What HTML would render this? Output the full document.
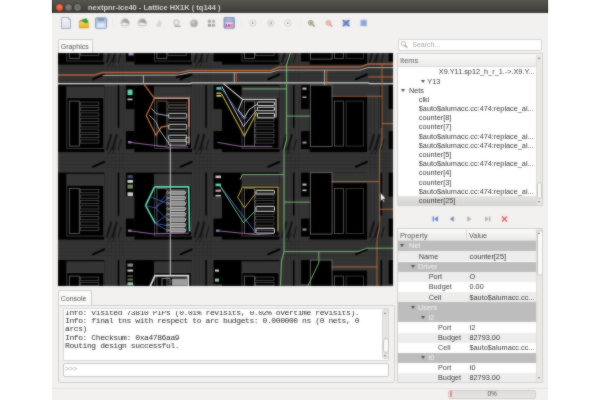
<!DOCTYPE html>
<html><head><meta charset="utf-8">
<style>
*{margin:0;padding:0;box-sizing:border-box}
html,body{width:600px;height:400px;overflow:hidden;background:#fff;font-family:"Liberation Sans",sans-serif}
.a{position:absolute}
#win{position:absolute;left:52px;top:0;width:496px;height:400px;background:#f2f1f0;overflow:hidden;will-change:transform}
#title{position:absolute;left:0;top:0;width:496px;height:12.8px;background:linear-gradient(#58574f,#45443f 70%,#393834)}
#title .t{position:absolute;left:36px;top:3.7px;font-size:7.5px;line-height:7.5px;font-weight:bold;color:#dfdbd2;white-space:nowrap;letter-spacing:0}
.btn{position:absolute;top:3.5px;width:7px;height:7px;border-radius:50%}
.tab{position:absolute;background:#fbfbfa;border:1px solid #cfcdca;border-bottom:none;border-radius:2px 2px 0 0;font-size:7.5px;color:#4c4c4c}
#gfx{position:absolute;left:6px;top:53.4px;width:335px;height:233.1px;background:#000;overflow:hidden}
.tr{font-size:7.3px;color:#333;white-space:nowrap;line-height:9px}
.arr{width:0;height:0;border-left:2.2px solid transparent;border-right:2.2px solid transparent;border-top:3px solid #4c4c4c}
.mono{font-family:"Liberation Mono",monospace}
#win2{position:absolute;left:52px;top:0;width:496px;height:400px;background:#f2f1f0;overflow:hidden;filter:blur(1px);opacity:0.5}
.title2{position:absolute;left:0;top:0;width:496px;height:12.8px;background:linear-gradient(#58574f,#45443f 70%,#393834)}
.title2 .t{position:absolute;left:36px;top:3.7px;font-size:7.5px;line-height:7.5px;font-weight:bold;color:#dfdbd2;white-space:nowrap;letter-spacing:0}
.gfx2{position:absolute;left:6px;top:53.4px;width:335px;height:233.1px;background:#000;overflow:hidden}
</style></head><body>
<div id="win">
  <div id="title">
    <div class="btn" style="left:4px;background:radial-gradient(circle at 50% 40%,#f2835a,#dc5530 60%,#b8482a);box-shadow:0 0 0 0.5px #5a2a1a"></div>
    <div class="btn" style="left:13px;background:radial-gradient(circle at 50% 40%,#85847f,#6a6965 60%,#5c5b57);box-shadow:0 0 0 0.5px #2e2d2a"></div>
    <div class="btn" style="left:22px;background:radial-gradient(circle at 50% 45%,#6a6965 30%,#85847f 45%,#6a6965 60%,#5c5b57);box-shadow:0 0 0 0.5px #2e2d2a"></div>
    <div class="t">nextpnr-ice40 - Lattice HX1K ( tq144 )</div>
  </div>
  <div class="a" style="left:0;top:12.8px;width:496px;height:1.2px;background:#fbfbfa"></div>
  <!-- toolbar -->
<svg class="a" style="left:0;top:0" width="496" height="40" viewBox="52 0 496 40">
<defs>
<linearGradient id="gdoc" x1="0" y1="0" x2="0" y2="1"><stop offset="0" stop-color="#f4f6fa"/><stop offset="1" stop-color="#d8dee8"/></linearGradient>
<linearGradient id="gfold" x1="0" y1="0" x2="0" y2="1"><stop offset="0" stop-color="#f4e060"/><stop offset="1" stop-color="#e0a818"/></linearGradient>
<linearGradient id="gsave" x1="0" y1="0" x2="0" y2="1"><stop offset="0" stop-color="#a8b8d8"/><stop offset="1" stop-color="#c8d8f0"/></linearGradient>
<radialGradient id="ggray" cx="0.6" cy="0.35" r="0.7"><stop offset="0" stop-color="#d8d8d8"/><stop offset="0.5" stop-color="#a8a8a8"/><stop offset="1" stop-color="#c8c8c8"/></radialGradient>
</defs>
<!-- new -->
<path d="M61.5,17.5 H68.5 L70.5,19.5 V28.5 H61.5 Z" fill="url(#gdoc)" stroke="#a4aab4" stroke-width="0.9"/>
<path d="M68.5,17.5 V19.5 H70.5" fill="none" stroke="#9aa0aa" stroke-width="0.7"/>
<!-- open -->
<path d="M79.3,21.5 H83 L84,22.5 H88.6 V28 H79.3 Z" fill="url(#gfold)" stroke="#c89818" stroke-width="0.5"/>
<path d="M81,21 Q83,18 86.5,18.5 L88.5,21.5 L86.5,23.5 Z" fill="#3c9a2a"/>
<path d="M79.5,22 Q80.5,19.5 82.5,19.8" fill="none" stroke="#e87828" stroke-width="1.2"/>
<!-- save -->
<rect x="95.6" y="17.8" width="11" height="10.6" rx="1" fill="url(#gsave)" stroke="#8494b0" stroke-width="0.9"/>
<rect x="98" y="18" width="6" height="3" fill="#8898b8"/>
<rect x="97.5" y="23.3" width="7.3" height="4.5" fill="#dde8f8"/>
<!-- separator -->
<rect x="112" y="19" width="0.6" height="8" fill="#e4e2de"/>
<!-- gray icons -->
<radialGradient id="gsph" cx="0.65" cy="0.3" r="0.75"><stop offset="0" stop-color="#9a9a9a"/><stop offset="0.6" stop-color="#b8b8b8"/><stop offset="1" stop-color="#d4d4d4"/></radialGradient>
<circle cx="125" cy="23.2" r="4.6" fill="url(#gsph)"/>
<path d="M120.8,24.5 L124,22.3 L129,24 L128.5,27.5 L121.5,27.5 Z" fill="#ececec"/>
<path d="M121,25.5 L128.8,25.5" stroke="#b0b0b0" stroke-width="0.6"/>
<circle cx="142.2" cy="23.2" r="4.6" fill="url(#gsph)"/>
<path d="M138,24.5 L141.2,22.3 L146.2,24 L145.7,27.5 L138.7,27.5 Z" fill="#ececec"/>
<path d="M138.2,25.5 L146,25.5" stroke="#b0b0b0" stroke-width="0.6"/>
<path d="M156,26 L159,20 L162,23 L160,27 Z" fill="#d0d0d0" opacity="0.8"/>
<circle cx="176.5" cy="22.5" r="2.7" fill="#e8e8e8" stroke="#b4b4b4" stroke-width="0.9"/>
<path d="M174.5,25.5 H180.5 V27 H174.5 Z" fill="#a8a8a8"/>
<circle cx="194" cy="23.3" r="3.9" fill="#b0b0b0"/>
<circle cx="192.8" cy="22" r="1.8" fill="#c8c8c8"/>
<circle cx="209.5" cy="21.3" r="1.7" fill="#a8a8a8"/><circle cx="213.5" cy="21.3" r="1.7" fill="#b8b8b8"/>
<circle cx="209.5" cy="25.3" r="1.7" fill="#9c9c9c"/><circle cx="213.5" cy="25.3" r="1.7" fill="#a8a8a8"/>
<!-- save as -->
<rect x="224" y="17.5" width="10.3" height="10.8" rx="0.8" fill="#94acd4" stroke="#6a80a8" stroke-width="0.8"/>
<rect x="226.3" y="17.8" width="5.6" height="3" fill="#a8b8d0"/>
<rect x="225.6" y="22.3" width="7.2" height="5.3" fill="#f0d0e8"/>
<text x="229.2" y="26.8" font-size="3.6" font-family="Liberation Sans" font-weight="bold" fill="#c03070" text-anchor="middle">ABC</text>
<rect x="241.4" y="19" width="0.6" height="8" fill="#e8e6e2"/>
<!-- circles -->
<g fill="none" stroke="#c8c6c2" stroke-width="0.7">
<circle cx="252.8" cy="23.1" r="3.2"/><circle cx="270.8" cy="23.1" r="3.2"/><circle cx="287.8" cy="23.1" r="3.2"/>
</g>
<path d="M252,21.6 L254,23.1 L252,24.6 Z" fill="#9a9894"/>
<rect x="269.6" y="21.7" width="0.8" height="2.8" fill="#9a9894"/><rect x="271.2" y="21.7" width="0.8" height="2.8" fill="#9a9894"/>
<rect x="287" y="22.3" width="1.6" height="1.6" fill="#9a9894"/>
<rect x="300.6" y="19" width="0.6" height="8" fill="#e8e6e2"/>
<!-- zoom in -->
<circle cx="310.8" cy="22.8" r="2.4" fill="#c8d4a8" stroke="#98a080" stroke-width="1"/>
<circle cx="310.8" cy="22.8" r="1.1" fill="#88a060"/>
<path d="M312.6,24.6 L314.5,26.5" stroke="#8a9078" stroke-width="1.4"/>
<!-- zoom out -->
<circle cx="328.4" cy="22.8" r="2.4" fill="#f4d8cc" stroke="#d8a090" stroke-width="1"/>
<path d="M327.2,22.8 H329.6" stroke="#d07060" stroke-width="0.8"/>
<path d="M330.2,24.6 L332.1,26.5" stroke="#c88a80" stroke-width="1.4"/>
<!-- fit -->
<rect x="342.8" y="20" width="6.6" height="6.2" fill="#9cb0e0"/>
<path d="M342.8,20 L349.4,26.2 M349.4,20 L342.8,26.2" stroke="#5a6cb0" stroke-width="1.2"/>
<!-- square -->
<rect x="360.8" y="20" width="6" height="6" fill="#8ea4d8" stroke="#b4c4e8" stroke-width="0.6"/>
</svg>
  <!-- graphics tab -->
  <div class="tab" style="left:5.5px;top:38.5px;width:35px;height:15px"></div><div class="a" style="left:8.7px;top:42.9px;font-size:7px;line-height:7px;color:#505050">Graphics</div>
  <div id="gfx">
    <svg id="gsvg" width="335" height="233.1" viewBox="58 53.4 335 233.1" style="display:block">
<rect x="58.00" y="53.00" width="335.00" height="234.00" fill="#353535" />
<rect x="58.00" y="66.50" width="335.00" height="0.60" fill="#2a2a2a" />
<rect x="58.00" y="70.00" width="335.00" height="0.60" fill="#2a2a2a" />
<rect x="58.00" y="73.50" width="335.00" height="0.60" fill="#2a2a2a" />
<rect x="58.00" y="77.00" width="335.00" height="0.60" fill="#2a2a2a" />
<rect x="58.00" y="80.50" width="335.00" height="0.60" fill="#2a2a2a" />
<rect x="58.00" y="154.00" width="335.00" height="0.60" fill="#2a2a2a" />
<rect x="58.00" y="157.50" width="335.00" height="0.60" fill="#2a2a2a" />
<rect x="58.00" y="161.00" width="335.00" height="0.60" fill="#2a2a2a" />
<rect x="58.00" y="164.50" width="335.00" height="0.60" fill="#2a2a2a" />
<rect x="58.00" y="168.00" width="335.00" height="0.60" fill="#2a2a2a" />
<rect x="58.00" y="241.50" width="335.00" height="0.60" fill="#2a2a2a" />
<rect x="58.00" y="245.00" width="335.00" height="0.60" fill="#2a2a2a" />
<rect x="58.00" y="248.50" width="335.00" height="0.60" fill="#2a2a2a" />
<rect x="58.00" y="252.00" width="335.00" height="0.60" fill="#2a2a2a" />
<rect x="58.00" y="255.50" width="335.00" height="0.60" fill="#2a2a2a" />
<rect x="58.00" y="329.00" width="335.00" height="0.60" fill="#2a2a2a" />
<rect x="58.00" y="332.50" width="335.00" height="0.60" fill="#2a2a2a" />
<rect x="58.00" y="336.00" width="335.00" height="0.60" fill="#2a2a2a" />
<rect x="58.00" y="339.50" width="335.00" height="0.60" fill="#2a2a2a" />
<rect x="58.00" y="343.00" width="335.00" height="0.60" fill="#2a2a2a" />
<rect x="107.30" y="53.00" width="0.60" height="233.00" fill="#2c2c2c" />
<rect x="111.30" y="53.00" width="0.60" height="233.00" fill="#2c2c2c" />
<rect x="115.30" y="53.00" width="0.60" height="233.00" fill="#2c2c2c" />
<rect x="119.30" y="53.00" width="0.60" height="233.00" fill="#2c2c2c" />
<rect x="122.80" y="53.00" width="0.60" height="233.00" fill="#2c2c2c" />
<rect x="194.90" y="53.00" width="0.60" height="233.00" fill="#2c2c2c" />
<rect x="198.90" y="53.00" width="0.60" height="233.00" fill="#2c2c2c" />
<rect x="202.90" y="53.00" width="0.60" height="233.00" fill="#2c2c2c" />
<rect x="206.90" y="53.00" width="0.60" height="233.00" fill="#2c2c2c" />
<rect x="210.40" y="53.00" width="0.60" height="233.00" fill="#2c2c2c" />
<rect x="282.50" y="53.00" width="0.60" height="233.00" fill="#2c2c2c" />
<rect x="286.50" y="53.00" width="0.60" height="233.00" fill="#2c2c2c" />
<rect x="290.50" y="53.00" width="0.60" height="233.00" fill="#2c2c2c" />
<rect x="294.50" y="53.00" width="0.60" height="233.00" fill="#2c2c2c" />
<rect x="298.00" y="53.00" width="0.60" height="233.00" fill="#2c2c2c" />
<rect x="370.10" y="53.00" width="0.60" height="233.00" fill="#2c2c2c" />
<rect x="374.10" y="53.00" width="0.60" height="233.00" fill="#2c2c2c" />
<rect x="378.10" y="53.00" width="0.60" height="233.00" fill="#2c2c2c" />
<rect x="382.10" y="53.00" width="0.60" height="233.00" fill="#2c2c2c" />
<rect x="385.60" y="53.00" width="0.60" height="233.00" fill="#2c2c2c" />
<rect x="457.70" y="53.00" width="0.60" height="233.00" fill="#2c2c2c" />
<rect x="461.70" y="53.00" width="0.60" height="233.00" fill="#2c2c2c" />
<rect x="465.70" y="53.00" width="0.60" height="233.00" fill="#2c2c2c" />
<rect x="469.70" y="53.00" width="0.60" height="233.00" fill="#2c2c2c" />
<rect x="473.20" y="53.00" width="0.60" height="233.00" fill="#2c2c2c" />
<rect x="38.30" y="-2.00" width="8.50" height="24.00" fill="#000" />
<rect x="38.30" y="44.00" width="8.50" height="18.00" fill="#000" />
<rect x="46.80" y="-2.00" width="57.50" height="67.00" fill="#000" />
<rect x="66.30" y="-0.80" width="38.00" height="11.30" fill="#353535" />
<rect x="66.80" y="10.50" width="37.00" height="51.00" fill="none" stroke="#484848" stroke-width="0.8" rx="0"/>
<rect x="69.30" y="14.00" width="10.00" height="45.00" fill="none" stroke="#6e6e6e" stroke-width="0.8" rx="0"/>
<rect x="80.30" y="15.00" width="18.50" height="3.20" fill="none" stroke="#5a5a5a" stroke-width="0.7" rx="0"/>
<rect x="80.30" y="20.40" width="18.50" height="3.20" fill="none" stroke="#5a5a5a" stroke-width="0.7" rx="0"/>
<rect x="80.30" y="25.80" width="18.50" height="3.20" fill="none" stroke="#5a5a5a" stroke-width="0.7" rx="0"/>
<rect x="80.30" y="31.20" width="18.50" height="3.20" fill="none" stroke="#5a5a5a" stroke-width="0.7" rx="0"/>
<rect x="80.30" y="36.60" width="18.50" height="3.20" fill="none" stroke="#5a5a5a" stroke-width="0.7" rx="0"/>
<rect x="80.30" y="42.00" width="18.50" height="3.20" fill="none" stroke="#5a5a5a" stroke-width="0.7" rx="0"/>
<rect x="80.30" y="47.40" width="18.50" height="3.20" fill="none" stroke="#5a5a5a" stroke-width="0.7" rx="0"/>
<rect x="80.30" y="52.80" width="18.50" height="3.20" fill="none" stroke="#5a5a5a" stroke-width="0.7" rx="0"/>
<polyline points="118.50,-2.00 118.50,41.00" fill="none" stroke="#000" stroke-width="1.5" stroke-linejoin="miter" />
<polyline points="106.80,63.00 111.30,47.00" fill="none" stroke="#141414" stroke-width="2.2" stroke-linejoin="miter" />
<polyline points="112.30,63.00 116.80,47.00" fill="none" stroke="#141414" stroke-width="2.2" stroke-linejoin="miter" />
<polyline points="118.30,63.00 121.30,52.00" fill="none" stroke="#1a1a1a" stroke-width="1.5" stroke-linejoin="miter" />
<polyline points="92.30,80.00 104.80,74.50" fill="none" stroke="#000" stroke-width="2.0" stroke-linejoin="miter" />
<polyline points="108.30,67.00 112.30,59.00" fill="none" stroke="#1a1a1a" stroke-width="1.0" stroke-linejoin="miter" />
<polyline points="112.30,67.00 116.30,59.00" fill="none" stroke="#1a1a1a" stroke-width="1.0" stroke-linejoin="miter" />
<rect x="125.90" y="-2.00" width="8.50" height="24.00" fill="#000" />
<rect x="125.90" y="44.00" width="8.50" height="18.00" fill="#000" />
<rect x="134.40" y="-2.00" width="57.50" height="67.00" fill="#000" />
<rect x="153.90" y="-0.80" width="38.00" height="11.30" fill="#353535" />
<rect x="154.40" y="10.50" width="37.00" height="51.00" fill="none" stroke="#484848" stroke-width="0.8" rx="0"/>
<rect x="156.90" y="14.00" width="10.00" height="45.00" fill="none" stroke="#6e6e6e" stroke-width="0.8" rx="0"/>
<rect x="167.90" y="15.00" width="18.50" height="3.20" fill="none" stroke="#5a5a5a" stroke-width="0.7" rx="0"/>
<rect x="167.90" y="20.40" width="18.50" height="3.20" fill="none" stroke="#5a5a5a" stroke-width="0.7" rx="0"/>
<rect x="167.90" y="25.80" width="18.50" height="3.20" fill="none" stroke="#5a5a5a" stroke-width="0.7" rx="0"/>
<rect x="167.90" y="31.20" width="18.50" height="3.20" fill="none" stroke="#5a5a5a" stroke-width="0.7" rx="0"/>
<rect x="167.90" y="36.60" width="18.50" height="3.20" fill="none" stroke="#5a5a5a" stroke-width="0.7" rx="0"/>
<rect x="167.90" y="42.00" width="18.50" height="3.20" fill="none" stroke="#5a5a5a" stroke-width="0.7" rx="0"/>
<rect x="167.90" y="47.40" width="18.50" height="3.20" fill="none" stroke="#5a5a5a" stroke-width="0.7" rx="0"/>
<rect x="167.90" y="52.80" width="18.50" height="3.20" fill="none" stroke="#5a5a5a" stroke-width="0.7" rx="0"/>
<polyline points="206.10,-2.00 206.10,41.00" fill="none" stroke="#000" stroke-width="1.5" stroke-linejoin="miter" />
<polyline points="194.40,63.00 198.90,47.00" fill="none" stroke="#141414" stroke-width="2.2" stroke-linejoin="miter" />
<polyline points="199.90,63.00 204.40,47.00" fill="none" stroke="#141414" stroke-width="2.2" stroke-linejoin="miter" />
<polyline points="205.90,63.00 208.90,52.00" fill="none" stroke="#1a1a1a" stroke-width="1.5" stroke-linejoin="miter" />
<polyline points="179.90,80.00 192.40,74.50" fill="none" stroke="#000" stroke-width="2.0" stroke-linejoin="miter" />
<polyline points="195.90,67.00 199.90,59.00" fill="none" stroke="#1a1a1a" stroke-width="1.0" stroke-linejoin="miter" />
<polyline points="199.90,67.00 203.90,59.00" fill="none" stroke="#1a1a1a" stroke-width="1.0" stroke-linejoin="miter" />
<rect x="213.50" y="-2.00" width="8.50" height="24.00" fill="#000" />
<rect x="213.50" y="44.00" width="8.50" height="18.00" fill="#000" />
<rect x="222.00" y="-2.00" width="57.50" height="67.00" fill="#000" />
<rect x="241.50" y="-0.80" width="38.00" height="11.30" fill="#353535" />
<rect x="242.00" y="10.50" width="37.00" height="51.00" fill="none" stroke="#484848" stroke-width="0.8" rx="0"/>
<rect x="244.50" y="14.00" width="10.00" height="45.00" fill="none" stroke="#6e6e6e" stroke-width="0.8" rx="0"/>
<rect x="255.50" y="15.00" width="18.50" height="3.20" fill="none" stroke="#5a5a5a" stroke-width="0.7" rx="0"/>
<rect x="255.50" y="20.40" width="18.50" height="3.20" fill="none" stroke="#5a5a5a" stroke-width="0.7" rx="0"/>
<rect x="255.50" y="25.80" width="18.50" height="3.20" fill="none" stroke="#5a5a5a" stroke-width="0.7" rx="0"/>
<rect x="255.50" y="31.20" width="18.50" height="3.20" fill="none" stroke="#5a5a5a" stroke-width="0.7" rx="0"/>
<rect x="255.50" y="36.60" width="18.50" height="3.20" fill="none" stroke="#5a5a5a" stroke-width="0.7" rx="0"/>
<rect x="255.50" y="42.00" width="18.50" height="3.20" fill="none" stroke="#5a5a5a" stroke-width="0.7" rx="0"/>
<rect x="255.50" y="47.40" width="18.50" height="3.20" fill="none" stroke="#5a5a5a" stroke-width="0.7" rx="0"/>
<rect x="255.50" y="52.80" width="18.50" height="3.20" fill="none" stroke="#5a5a5a" stroke-width="0.7" rx="0"/>
<polyline points="293.70,-2.00 293.70,41.00" fill="none" stroke="#000" stroke-width="1.5" stroke-linejoin="miter" />
<polyline points="282.00,63.00 286.50,47.00" fill="none" stroke="#141414" stroke-width="2.2" stroke-linejoin="miter" />
<polyline points="287.50,63.00 292.00,47.00" fill="none" stroke="#141414" stroke-width="2.2" stroke-linejoin="miter" />
<polyline points="293.50,63.00 296.50,52.00" fill="none" stroke="#1a1a1a" stroke-width="1.5" stroke-linejoin="miter" />
<polyline points="267.50,80.00 280.00,74.50" fill="none" stroke="#000" stroke-width="2.0" stroke-linejoin="miter" />
<polyline points="283.50,67.00 287.50,59.00" fill="none" stroke="#1a1a1a" stroke-width="1.0" stroke-linejoin="miter" />
<polyline points="287.50,67.00 291.50,59.00" fill="none" stroke="#1a1a1a" stroke-width="1.0" stroke-linejoin="miter" />
<rect x="301.10" y="-2.00" width="8.50" height="24.00" fill="#000" />
<rect x="301.10" y="44.00" width="8.50" height="18.00" fill="#000" />
<rect x="309.60" y="-2.00" width="57.50" height="67.00" fill="#000" />
<rect x="331.60" y="-2.00" width="50.50" height="10.50" fill="#353535" />
<rect x="310.60" y="-2.00" width="21.50" height="61.50" fill="none" stroke="#707070" stroke-width="0.8" rx="0"/>
<rect x="334.60" y="14.00" width="9.00" height="45.00" fill="none" stroke="#606060" stroke-width="0.8" rx="0"/>
<rect x="346.10" y="14.00" width="17.50" height="45.00" fill="none" stroke="#404040" stroke-width="0.8" rx="0"/>
<polyline points="381.30,-2.00 381.30,41.00" fill="none" stroke="#000" stroke-width="1.5" stroke-linejoin="miter" />
<polyline points="369.60,63.00 374.10,47.00" fill="none" stroke="#141414" stroke-width="2.2" stroke-linejoin="miter" />
<polyline points="375.10,63.00 379.60,47.00" fill="none" stroke="#141414" stroke-width="2.2" stroke-linejoin="miter" />
<polyline points="381.10,63.00 384.10,52.00" fill="none" stroke="#1a1a1a" stroke-width="1.5" stroke-linejoin="miter" />
<polyline points="355.10,80.00 367.60,74.50" fill="none" stroke="#000" stroke-width="2.0" stroke-linejoin="miter" />
<polyline points="371.10,67.00 375.10,59.00" fill="none" stroke="#1a1a1a" stroke-width="1.0" stroke-linejoin="miter" />
<polyline points="375.10,67.00 379.10,59.00" fill="none" stroke="#1a1a1a" stroke-width="1.0" stroke-linejoin="miter" />
<rect x="388.70" y="-2.00" width="8.50" height="24.00" fill="#000" />
<rect x="388.70" y="44.00" width="8.50" height="18.00" fill="#000" />
<rect x="397.20" y="-2.00" width="57.50" height="67.00" fill="#000" />
<rect x="416.70" y="-0.80" width="38.00" height="11.30" fill="#353535" />
<rect x="417.20" y="10.50" width="37.00" height="51.00" fill="none" stroke="#484848" stroke-width="0.8" rx="0"/>
<rect x="419.70" y="14.00" width="10.00" height="45.00" fill="none" stroke="#6e6e6e" stroke-width="0.8" rx="0"/>
<rect x="430.70" y="15.00" width="18.50" height="3.20" fill="none" stroke="#5a5a5a" stroke-width="0.7" rx="0"/>
<rect x="430.70" y="20.40" width="18.50" height="3.20" fill="none" stroke="#5a5a5a" stroke-width="0.7" rx="0"/>
<rect x="430.70" y="25.80" width="18.50" height="3.20" fill="none" stroke="#5a5a5a" stroke-width="0.7" rx="0"/>
<rect x="430.70" y="31.20" width="18.50" height="3.20" fill="none" stroke="#5a5a5a" stroke-width="0.7" rx="0"/>
<rect x="430.70" y="36.60" width="18.50" height="3.20" fill="none" stroke="#5a5a5a" stroke-width="0.7" rx="0"/>
<rect x="430.70" y="42.00" width="18.50" height="3.20" fill="none" stroke="#5a5a5a" stroke-width="0.7" rx="0"/>
<rect x="430.70" y="47.40" width="18.50" height="3.20" fill="none" stroke="#5a5a5a" stroke-width="0.7" rx="0"/>
<rect x="430.70" y="52.80" width="18.50" height="3.20" fill="none" stroke="#5a5a5a" stroke-width="0.7" rx="0"/>
<polyline points="468.90,-2.00 468.90,41.00" fill="none" stroke="#000" stroke-width="1.5" stroke-linejoin="miter" />
<polyline points="457.20,63.00 461.70,47.00" fill="none" stroke="#141414" stroke-width="2.2" stroke-linejoin="miter" />
<polyline points="462.70,63.00 467.20,47.00" fill="none" stroke="#141414" stroke-width="2.2" stroke-linejoin="miter" />
<polyline points="468.70,63.00 471.70,52.00" fill="none" stroke="#1a1a1a" stroke-width="1.5" stroke-linejoin="miter" />
<polyline points="442.70,80.00 455.20,74.50" fill="none" stroke="#000" stroke-width="2.0" stroke-linejoin="miter" />
<polyline points="458.70,67.00 462.70,59.00" fill="none" stroke="#1a1a1a" stroke-width="1.0" stroke-linejoin="miter" />
<polyline points="462.70,67.00 466.70,59.00" fill="none" stroke="#1a1a1a" stroke-width="1.0" stroke-linejoin="miter" />
<rect x="38.30" y="85.50" width="8.50" height="24.00" fill="#000" />
<rect x="38.30" y="131.50" width="8.50" height="18.00" fill="#000" />
<rect x="46.80" y="85.50" width="57.50" height="67.00" fill="#000" />
<rect x="66.30" y="86.70" width="38.00" height="11.30" fill="#353535" />
<rect x="66.80" y="98.00" width="37.00" height="51.00" fill="none" stroke="#484848" stroke-width="0.8" rx="0"/>
<rect x="69.30" y="101.50" width="10.00" height="45.00" fill="none" stroke="#6e6e6e" stroke-width="0.8" rx="0"/>
<rect x="80.30" y="102.50" width="18.50" height="3.20" fill="none" stroke="#5a5a5a" stroke-width="0.7" rx="0"/>
<rect x="80.30" y="107.90" width="18.50" height="3.20" fill="none" stroke="#5a5a5a" stroke-width="0.7" rx="0"/>
<rect x="80.30" y="113.30" width="18.50" height="3.20" fill="none" stroke="#5a5a5a" stroke-width="0.7" rx="0"/>
<rect x="80.30" y="118.70" width="18.50" height="3.20" fill="none" stroke="#5a5a5a" stroke-width="0.7" rx="0"/>
<rect x="80.30" y="124.10" width="18.50" height="3.20" fill="none" stroke="#5a5a5a" stroke-width="0.7" rx="0"/>
<rect x="80.30" y="129.50" width="18.50" height="3.20" fill="none" stroke="#5a5a5a" stroke-width="0.7" rx="0"/>
<rect x="80.30" y="134.90" width="18.50" height="3.20" fill="none" stroke="#5a5a5a" stroke-width="0.7" rx="0"/>
<rect x="80.30" y="140.30" width="18.50" height="3.20" fill="none" stroke="#5a5a5a" stroke-width="0.7" rx="0"/>
<polyline points="118.50,85.50 118.50,128.50" fill="none" stroke="#000" stroke-width="1.5" stroke-linejoin="miter" />
<polyline points="106.80,150.50 111.30,134.50" fill="none" stroke="#141414" stroke-width="2.2" stroke-linejoin="miter" />
<polyline points="112.30,150.50 116.80,134.50" fill="none" stroke="#141414" stroke-width="2.2" stroke-linejoin="miter" />
<polyline points="118.30,150.50 121.30,139.50" fill="none" stroke="#1a1a1a" stroke-width="1.5" stroke-linejoin="miter" />
<polyline points="92.30,167.50 104.80,162.00" fill="none" stroke="#000" stroke-width="2.0" stroke-linejoin="miter" />
<polyline points="108.30,154.50 112.30,146.50" fill="none" stroke="#1a1a1a" stroke-width="1.0" stroke-linejoin="miter" />
<polyline points="112.30,154.50 116.30,146.50" fill="none" stroke="#1a1a1a" stroke-width="1.0" stroke-linejoin="miter" />
<rect x="125.90" y="85.50" width="8.50" height="24.00" fill="#000" />
<rect x="125.90" y="131.50" width="8.50" height="18.00" fill="#000" />
<rect x="134.40" y="85.50" width="57.50" height="67.00" fill="#000" />
<rect x="153.90" y="86.70" width="38.00" height="11.30" fill="#353535" />
<rect x="154.40" y="98.00" width="37.00" height="51.00" fill="none" stroke="#484848" stroke-width="0.8" rx="0"/>
<rect x="156.90" y="101.50" width="10.00" height="45.00" fill="none" stroke="#6e6e6e" stroke-width="0.8" rx="0"/>
<rect x="167.90" y="102.50" width="18.50" height="3.20" fill="none" stroke="#5a5a5a" stroke-width="0.7" rx="0"/>
<rect x="167.90" y="107.90" width="18.50" height="3.20" fill="none" stroke="#5a5a5a" stroke-width="0.7" rx="0"/>
<rect x="167.90" y="113.30" width="18.50" height="3.20" fill="none" stroke="#5a5a5a" stroke-width="0.7" rx="0"/>
<rect x="167.90" y="118.70" width="18.50" height="3.20" fill="none" stroke="#5a5a5a" stroke-width="0.7" rx="0"/>
<rect x="167.90" y="124.10" width="18.50" height="3.20" fill="none" stroke="#5a5a5a" stroke-width="0.7" rx="0"/>
<rect x="167.90" y="129.50" width="18.50" height="3.20" fill="none" stroke="#5a5a5a" stroke-width="0.7" rx="0"/>
<rect x="167.90" y="134.90" width="18.50" height="3.20" fill="none" stroke="#5a5a5a" stroke-width="0.7" rx="0"/>
<rect x="167.90" y="140.30" width="18.50" height="3.20" fill="none" stroke="#5a5a5a" stroke-width="0.7" rx="0"/>
<polyline points="206.10,85.50 206.10,128.50" fill="none" stroke="#000" stroke-width="1.5" stroke-linejoin="miter" />
<polyline points="194.40,150.50 198.90,134.50" fill="none" stroke="#141414" stroke-width="2.2" stroke-linejoin="miter" />
<polyline points="199.90,150.50 204.40,134.50" fill="none" stroke="#141414" stroke-width="2.2" stroke-linejoin="miter" />
<polyline points="205.90,150.50 208.90,139.50" fill="none" stroke="#1a1a1a" stroke-width="1.5" stroke-linejoin="miter" />
<polyline points="179.90,167.50 192.40,162.00" fill="none" stroke="#000" stroke-width="2.0" stroke-linejoin="miter" />
<polyline points="195.90,154.50 199.90,146.50" fill="none" stroke="#1a1a1a" stroke-width="1.0" stroke-linejoin="miter" />
<polyline points="199.90,154.50 203.90,146.50" fill="none" stroke="#1a1a1a" stroke-width="1.0" stroke-linejoin="miter" />
<rect x="213.50" y="85.50" width="8.50" height="24.00" fill="#000" />
<rect x="213.50" y="131.50" width="8.50" height="18.00" fill="#000" />
<rect x="222.00" y="85.50" width="57.50" height="67.00" fill="#000" />
<rect x="241.50" y="86.70" width="38.00" height="11.30" fill="#353535" />
<rect x="242.00" y="98.00" width="37.00" height="51.00" fill="none" stroke="#484848" stroke-width="0.8" rx="0"/>
<rect x="244.50" y="101.50" width="10.00" height="45.00" fill="none" stroke="#6e6e6e" stroke-width="0.8" rx="0"/>
<rect x="255.50" y="102.50" width="18.50" height="3.20" fill="none" stroke="#5a5a5a" stroke-width="0.7" rx="0"/>
<rect x="255.50" y="107.90" width="18.50" height="3.20" fill="none" stroke="#5a5a5a" stroke-width="0.7" rx="0"/>
<rect x="255.50" y="113.30" width="18.50" height="3.20" fill="none" stroke="#5a5a5a" stroke-width="0.7" rx="0"/>
<rect x="255.50" y="118.70" width="18.50" height="3.20" fill="none" stroke="#5a5a5a" stroke-width="0.7" rx="0"/>
<rect x="255.50" y="124.10" width="18.50" height="3.20" fill="none" stroke="#5a5a5a" stroke-width="0.7" rx="0"/>
<rect x="255.50" y="129.50" width="18.50" height="3.20" fill="none" stroke="#5a5a5a" stroke-width="0.7" rx="0"/>
<rect x="255.50" y="134.90" width="18.50" height="3.20" fill="none" stroke="#5a5a5a" stroke-width="0.7" rx="0"/>
<rect x="255.50" y="140.30" width="18.50" height="3.20" fill="none" stroke="#5a5a5a" stroke-width="0.7" rx="0"/>
<polyline points="293.70,85.50 293.70,128.50" fill="none" stroke="#000" stroke-width="1.5" stroke-linejoin="miter" />
<polyline points="282.00,150.50 286.50,134.50" fill="none" stroke="#141414" stroke-width="2.2" stroke-linejoin="miter" />
<polyline points="287.50,150.50 292.00,134.50" fill="none" stroke="#141414" stroke-width="2.2" stroke-linejoin="miter" />
<polyline points="293.50,150.50 296.50,139.50" fill="none" stroke="#1a1a1a" stroke-width="1.5" stroke-linejoin="miter" />
<polyline points="267.50,167.50 280.00,162.00" fill="none" stroke="#000" stroke-width="2.0" stroke-linejoin="miter" />
<polyline points="283.50,154.50 287.50,146.50" fill="none" stroke="#1a1a1a" stroke-width="1.0" stroke-linejoin="miter" />
<polyline points="287.50,154.50 291.50,146.50" fill="none" stroke="#1a1a1a" stroke-width="1.0" stroke-linejoin="miter" />
<rect x="301.10" y="85.50" width="8.50" height="24.00" fill="#000" />
<rect x="301.10" y="131.50" width="8.50" height="18.00" fill="#000" />
<rect x="309.60" y="85.50" width="57.50" height="67.00" fill="#000" />
<rect x="331.60" y="85.50" width="50.50" height="10.50" fill="#353535" />
<rect x="310.60" y="85.50" width="21.50" height="61.50" fill="none" stroke="#707070" stroke-width="0.8" rx="0"/>
<rect x="334.60" y="101.50" width="9.00" height="45.00" fill="none" stroke="#606060" stroke-width="0.8" rx="0"/>
<rect x="346.10" y="101.50" width="17.50" height="45.00" fill="none" stroke="#404040" stroke-width="0.8" rx="0"/>
<polyline points="381.30,85.50 381.30,128.50" fill="none" stroke="#000" stroke-width="1.5" stroke-linejoin="miter" />
<polyline points="369.60,150.50 374.10,134.50" fill="none" stroke="#141414" stroke-width="2.2" stroke-linejoin="miter" />
<polyline points="375.10,150.50 379.60,134.50" fill="none" stroke="#141414" stroke-width="2.2" stroke-linejoin="miter" />
<polyline points="381.10,150.50 384.10,139.50" fill="none" stroke="#1a1a1a" stroke-width="1.5" stroke-linejoin="miter" />
<polyline points="355.10,167.50 367.60,162.00" fill="none" stroke="#000" stroke-width="2.0" stroke-linejoin="miter" />
<polyline points="371.10,154.50 375.10,146.50" fill="none" stroke="#1a1a1a" stroke-width="1.0" stroke-linejoin="miter" />
<polyline points="375.10,154.50 379.10,146.50" fill="none" stroke="#1a1a1a" stroke-width="1.0" stroke-linejoin="miter" />
<rect x="388.70" y="85.50" width="8.50" height="24.00" fill="#000" />
<rect x="388.70" y="131.50" width="8.50" height="18.00" fill="#000" />
<rect x="397.20" y="85.50" width="57.50" height="67.00" fill="#000" />
<rect x="416.70" y="86.70" width="38.00" height="11.30" fill="#353535" />
<rect x="417.20" y="98.00" width="37.00" height="51.00" fill="none" stroke="#484848" stroke-width="0.8" rx="0"/>
<rect x="419.70" y="101.50" width="10.00" height="45.00" fill="none" stroke="#6e6e6e" stroke-width="0.8" rx="0"/>
<rect x="430.70" y="102.50" width="18.50" height="3.20" fill="none" stroke="#5a5a5a" stroke-width="0.7" rx="0"/>
<rect x="430.70" y="107.90" width="18.50" height="3.20" fill="none" stroke="#5a5a5a" stroke-width="0.7" rx="0"/>
<rect x="430.70" y="113.30" width="18.50" height="3.20" fill="none" stroke="#5a5a5a" stroke-width="0.7" rx="0"/>
<rect x="430.70" y="118.70" width="18.50" height="3.20" fill="none" stroke="#5a5a5a" stroke-width="0.7" rx="0"/>
<rect x="430.70" y="124.10" width="18.50" height="3.20" fill="none" stroke="#5a5a5a" stroke-width="0.7" rx="0"/>
<rect x="430.70" y="129.50" width="18.50" height="3.20" fill="none" stroke="#5a5a5a" stroke-width="0.7" rx="0"/>
<rect x="430.70" y="134.90" width="18.50" height="3.20" fill="none" stroke="#5a5a5a" stroke-width="0.7" rx="0"/>
<rect x="430.70" y="140.30" width="18.50" height="3.20" fill="none" stroke="#5a5a5a" stroke-width="0.7" rx="0"/>
<polyline points="468.90,85.50 468.90,128.50" fill="none" stroke="#000" stroke-width="1.5" stroke-linejoin="miter" />
<polyline points="457.20,150.50 461.70,134.50" fill="none" stroke="#141414" stroke-width="2.2" stroke-linejoin="miter" />
<polyline points="462.70,150.50 467.20,134.50" fill="none" stroke="#141414" stroke-width="2.2" stroke-linejoin="miter" />
<polyline points="468.70,150.50 471.70,139.50" fill="none" stroke="#1a1a1a" stroke-width="1.5" stroke-linejoin="miter" />
<polyline points="442.70,167.50 455.20,162.00" fill="none" stroke="#000" stroke-width="2.0" stroke-linejoin="miter" />
<polyline points="458.70,154.50 462.70,146.50" fill="none" stroke="#1a1a1a" stroke-width="1.0" stroke-linejoin="miter" />
<polyline points="462.70,154.50 466.70,146.50" fill="none" stroke="#1a1a1a" stroke-width="1.0" stroke-linejoin="miter" />
<rect x="38.30" y="173.00" width="8.50" height="24.00" fill="#000" />
<rect x="38.30" y="219.00" width="8.50" height="18.00" fill="#000" />
<rect x="46.80" y="173.00" width="57.50" height="67.00" fill="#000" />
<rect x="66.30" y="174.20" width="38.00" height="11.30" fill="#353535" />
<rect x="66.80" y="185.50" width="37.00" height="51.00" fill="none" stroke="#484848" stroke-width="0.8" rx="0"/>
<rect x="69.30" y="189.00" width="10.00" height="45.00" fill="none" stroke="#6e6e6e" stroke-width="0.8" rx="0"/>
<rect x="80.30" y="190.00" width="18.50" height="3.20" fill="none" stroke="#5a5a5a" stroke-width="0.7" rx="0"/>
<rect x="80.30" y="195.40" width="18.50" height="3.20" fill="none" stroke="#5a5a5a" stroke-width="0.7" rx="0"/>
<rect x="80.30" y="200.80" width="18.50" height="3.20" fill="none" stroke="#5a5a5a" stroke-width="0.7" rx="0"/>
<rect x="80.30" y="206.20" width="18.50" height="3.20" fill="none" stroke="#5a5a5a" stroke-width="0.7" rx="0"/>
<rect x="80.30" y="211.60" width="18.50" height="3.20" fill="none" stroke="#5a5a5a" stroke-width="0.7" rx="0"/>
<rect x="80.30" y="217.00" width="18.50" height="3.20" fill="none" stroke="#5a5a5a" stroke-width="0.7" rx="0"/>
<rect x="80.30" y="222.40" width="18.50" height="3.20" fill="none" stroke="#5a5a5a" stroke-width="0.7" rx="0"/>
<rect x="80.30" y="227.80" width="18.50" height="3.20" fill="none" stroke="#5a5a5a" stroke-width="0.7" rx="0"/>
<polyline points="118.50,173.00 118.50,216.00" fill="none" stroke="#000" stroke-width="1.5" stroke-linejoin="miter" />
<polyline points="106.80,238.00 111.30,222.00" fill="none" stroke="#141414" stroke-width="2.2" stroke-linejoin="miter" />
<polyline points="112.30,238.00 116.80,222.00" fill="none" stroke="#141414" stroke-width="2.2" stroke-linejoin="miter" />
<polyline points="118.30,238.00 121.30,227.00" fill="none" stroke="#1a1a1a" stroke-width="1.5" stroke-linejoin="miter" />
<polyline points="92.30,255.00 104.80,249.50" fill="none" stroke="#000" stroke-width="2.0" stroke-linejoin="miter" />
<polyline points="108.30,242.00 112.30,234.00" fill="none" stroke="#1a1a1a" stroke-width="1.0" stroke-linejoin="miter" />
<polyline points="112.30,242.00 116.30,234.00" fill="none" stroke="#1a1a1a" stroke-width="1.0" stroke-linejoin="miter" />
<rect x="125.90" y="173.00" width="8.50" height="24.00" fill="#000" />
<rect x="125.90" y="219.00" width="8.50" height="18.00" fill="#000" />
<rect x="134.40" y="173.00" width="57.50" height="67.00" fill="#000" />
<rect x="153.90" y="174.20" width="38.00" height="11.30" fill="#353535" />
<rect x="154.40" y="185.50" width="37.00" height="51.00" fill="none" stroke="#484848" stroke-width="0.8" rx="0"/>
<rect x="156.90" y="189.00" width="10.00" height="45.00" fill="none" stroke="#6e6e6e" stroke-width="0.8" rx="0"/>
<rect x="167.90" y="190.00" width="18.50" height="3.20" fill="none" stroke="#5a5a5a" stroke-width="0.7" rx="0"/>
<rect x="167.90" y="195.40" width="18.50" height="3.20" fill="none" stroke="#5a5a5a" stroke-width="0.7" rx="0"/>
<rect x="167.90" y="200.80" width="18.50" height="3.20" fill="none" stroke="#5a5a5a" stroke-width="0.7" rx="0"/>
<rect x="167.90" y="206.20" width="18.50" height="3.20" fill="none" stroke="#5a5a5a" stroke-width="0.7" rx="0"/>
<rect x="167.90" y="211.60" width="18.50" height="3.20" fill="none" stroke="#5a5a5a" stroke-width="0.7" rx="0"/>
<rect x="167.90" y="217.00" width="18.50" height="3.20" fill="none" stroke="#5a5a5a" stroke-width="0.7" rx="0"/>
<rect x="167.90" y="222.40" width="18.50" height="3.20" fill="none" stroke="#5a5a5a" stroke-width="0.7" rx="0"/>
<rect x="167.90" y="227.80" width="18.50" height="3.20" fill="none" stroke="#5a5a5a" stroke-width="0.7" rx="0"/>
<polyline points="206.10,173.00 206.10,216.00" fill="none" stroke="#000" stroke-width="1.5" stroke-linejoin="miter" />
<polyline points="194.40,238.00 198.90,222.00" fill="none" stroke="#141414" stroke-width="2.2" stroke-linejoin="miter" />
<polyline points="199.90,238.00 204.40,222.00" fill="none" stroke="#141414" stroke-width="2.2" stroke-linejoin="miter" />
<polyline points="205.90,238.00 208.90,227.00" fill="none" stroke="#1a1a1a" stroke-width="1.5" stroke-linejoin="miter" />
<polyline points="179.90,255.00 192.40,249.50" fill="none" stroke="#000" stroke-width="2.0" stroke-linejoin="miter" />
<polyline points="195.90,242.00 199.90,234.00" fill="none" stroke="#1a1a1a" stroke-width="1.0" stroke-linejoin="miter" />
<polyline points="199.90,242.00 203.90,234.00" fill="none" stroke="#1a1a1a" stroke-width="1.0" stroke-linejoin="miter" />
<rect x="213.50" y="173.00" width="8.50" height="24.00" fill="#000" />
<rect x="213.50" y="219.00" width="8.50" height="18.00" fill="#000" />
<rect x="222.00" y="173.00" width="57.50" height="67.00" fill="#000" />
<rect x="241.50" y="174.20" width="38.00" height="11.30" fill="#353535" />
<rect x="242.00" y="185.50" width="37.00" height="51.00" fill="none" stroke="#484848" stroke-width="0.8" rx="0"/>
<rect x="244.50" y="189.00" width="10.00" height="45.00" fill="none" stroke="#6e6e6e" stroke-width="0.8" rx="0"/>
<rect x="255.50" y="190.00" width="18.50" height="3.20" fill="none" stroke="#5a5a5a" stroke-width="0.7" rx="0"/>
<rect x="255.50" y="195.40" width="18.50" height="3.20" fill="none" stroke="#5a5a5a" stroke-width="0.7" rx="0"/>
<rect x="255.50" y="200.80" width="18.50" height="3.20" fill="none" stroke="#5a5a5a" stroke-width="0.7" rx="0"/>
<rect x="255.50" y="206.20" width="18.50" height="3.20" fill="none" stroke="#5a5a5a" stroke-width="0.7" rx="0"/>
<rect x="255.50" y="211.60" width="18.50" height="3.20" fill="none" stroke="#5a5a5a" stroke-width="0.7" rx="0"/>
<rect x="255.50" y="217.00" width="18.50" height="3.20" fill="none" stroke="#5a5a5a" stroke-width="0.7" rx="0"/>
<rect x="255.50" y="222.40" width="18.50" height="3.20" fill="none" stroke="#5a5a5a" stroke-width="0.7" rx="0"/>
<rect x="255.50" y="227.80" width="18.50" height="3.20" fill="none" stroke="#5a5a5a" stroke-width="0.7" rx="0"/>
<polyline points="293.70,173.00 293.70,216.00" fill="none" stroke="#000" stroke-width="1.5" stroke-linejoin="miter" />
<polyline points="282.00,238.00 286.50,222.00" fill="none" stroke="#141414" stroke-width="2.2" stroke-linejoin="miter" />
<polyline points="287.50,238.00 292.00,222.00" fill="none" stroke="#141414" stroke-width="2.2" stroke-linejoin="miter" />
<polyline points="293.50,238.00 296.50,227.00" fill="none" stroke="#1a1a1a" stroke-width="1.5" stroke-linejoin="miter" />
<polyline points="267.50,255.00 280.00,249.50" fill="none" stroke="#000" stroke-width="2.0" stroke-linejoin="miter" />
<polyline points="283.50,242.00 287.50,234.00" fill="none" stroke="#1a1a1a" stroke-width="1.0" stroke-linejoin="miter" />
<polyline points="287.50,242.00 291.50,234.00" fill="none" stroke="#1a1a1a" stroke-width="1.0" stroke-linejoin="miter" />
<rect x="301.10" y="173.00" width="8.50" height="24.00" fill="#000" />
<rect x="301.10" y="219.00" width="8.50" height="18.00" fill="#000" />
<rect x="309.60" y="173.00" width="57.50" height="67.00" fill="#000" />
<rect x="331.60" y="173.00" width="50.50" height="10.50" fill="#353535" />
<rect x="310.60" y="173.00" width="21.50" height="61.50" fill="none" stroke="#707070" stroke-width="0.8" rx="0"/>
<rect x="334.60" y="189.00" width="9.00" height="45.00" fill="none" stroke="#606060" stroke-width="0.8" rx="0"/>
<rect x="346.10" y="189.00" width="17.50" height="45.00" fill="none" stroke="#404040" stroke-width="0.8" rx="0"/>
<polyline points="381.30,173.00 381.30,216.00" fill="none" stroke="#000" stroke-width="1.5" stroke-linejoin="miter" />
<polyline points="369.60,238.00 374.10,222.00" fill="none" stroke="#141414" stroke-width="2.2" stroke-linejoin="miter" />
<polyline points="375.10,238.00 379.60,222.00" fill="none" stroke="#141414" stroke-width="2.2" stroke-linejoin="miter" />
<polyline points="381.10,238.00 384.10,227.00" fill="none" stroke="#1a1a1a" stroke-width="1.5" stroke-linejoin="miter" />
<polyline points="355.10,255.00 367.60,249.50" fill="none" stroke="#000" stroke-width="2.0" stroke-linejoin="miter" />
<polyline points="371.10,242.00 375.10,234.00" fill="none" stroke="#1a1a1a" stroke-width="1.0" stroke-linejoin="miter" />
<polyline points="375.10,242.00 379.10,234.00" fill="none" stroke="#1a1a1a" stroke-width="1.0" stroke-linejoin="miter" />
<rect x="388.70" y="173.00" width="8.50" height="24.00" fill="#000" />
<rect x="388.70" y="219.00" width="8.50" height="18.00" fill="#000" />
<rect x="397.20" y="173.00" width="57.50" height="67.00" fill="#000" />
<rect x="416.70" y="174.20" width="38.00" height="11.30" fill="#353535" />
<rect x="417.20" y="185.50" width="37.00" height="51.00" fill="none" stroke="#484848" stroke-width="0.8" rx="0"/>
<rect x="419.70" y="189.00" width="10.00" height="45.00" fill="none" stroke="#6e6e6e" stroke-width="0.8" rx="0"/>
<rect x="430.70" y="190.00" width="18.50" height="3.20" fill="none" stroke="#5a5a5a" stroke-width="0.7" rx="0"/>
<rect x="430.70" y="195.40" width="18.50" height="3.20" fill="none" stroke="#5a5a5a" stroke-width="0.7" rx="0"/>
<rect x="430.70" y="200.80" width="18.50" height="3.20" fill="none" stroke="#5a5a5a" stroke-width="0.7" rx="0"/>
<rect x="430.70" y="206.20" width="18.50" height="3.20" fill="none" stroke="#5a5a5a" stroke-width="0.7" rx="0"/>
<rect x="430.70" y="211.60" width="18.50" height="3.20" fill="none" stroke="#5a5a5a" stroke-width="0.7" rx="0"/>
<rect x="430.70" y="217.00" width="18.50" height="3.20" fill="none" stroke="#5a5a5a" stroke-width="0.7" rx="0"/>
<rect x="430.70" y="222.40" width="18.50" height="3.20" fill="none" stroke="#5a5a5a" stroke-width="0.7" rx="0"/>
<rect x="430.70" y="227.80" width="18.50" height="3.20" fill="none" stroke="#5a5a5a" stroke-width="0.7" rx="0"/>
<polyline points="468.90,173.00 468.90,216.00" fill="none" stroke="#000" stroke-width="1.5" stroke-linejoin="miter" />
<polyline points="457.20,238.00 461.70,222.00" fill="none" stroke="#141414" stroke-width="2.2" stroke-linejoin="miter" />
<polyline points="462.70,238.00 467.20,222.00" fill="none" stroke="#141414" stroke-width="2.2" stroke-linejoin="miter" />
<polyline points="468.70,238.00 471.70,227.00" fill="none" stroke="#1a1a1a" stroke-width="1.5" stroke-linejoin="miter" />
<polyline points="442.70,255.00 455.20,249.50" fill="none" stroke="#000" stroke-width="2.0" stroke-linejoin="miter" />
<polyline points="458.70,242.00 462.70,234.00" fill="none" stroke="#1a1a1a" stroke-width="1.0" stroke-linejoin="miter" />
<polyline points="462.70,242.00 466.70,234.00" fill="none" stroke="#1a1a1a" stroke-width="1.0" stroke-linejoin="miter" />
<rect x="38.30" y="260.50" width="8.50" height="24.00" fill="#000" />
<rect x="38.30" y="306.50" width="8.50" height="18.00" fill="#000" />
<rect x="46.80" y="260.50" width="57.50" height="67.00" fill="#000" />
<rect x="66.30" y="261.70" width="38.00" height="11.30" fill="#353535" />
<rect x="66.80" y="273.00" width="37.00" height="51.00" fill="none" stroke="#484848" stroke-width="0.8" rx="0"/>
<rect x="69.30" y="276.50" width="10.00" height="45.00" fill="none" stroke="#6e6e6e" stroke-width="0.8" rx="0"/>
<rect x="80.30" y="277.50" width="18.50" height="3.20" fill="none" stroke="#5a5a5a" stroke-width="0.7" rx="0"/>
<rect x="80.30" y="282.90" width="18.50" height="3.20" fill="none" stroke="#5a5a5a" stroke-width="0.7" rx="0"/>
<rect x="80.30" y="288.30" width="18.50" height="3.20" fill="none" stroke="#5a5a5a" stroke-width="0.7" rx="0"/>
<rect x="80.30" y="293.70" width="18.50" height="3.20" fill="none" stroke="#5a5a5a" stroke-width="0.7" rx="0"/>
<rect x="80.30" y="299.10" width="18.50" height="3.20" fill="none" stroke="#5a5a5a" stroke-width="0.7" rx="0"/>
<rect x="80.30" y="304.50" width="18.50" height="3.20" fill="none" stroke="#5a5a5a" stroke-width="0.7" rx="0"/>
<rect x="80.30" y="309.90" width="18.50" height="3.20" fill="none" stroke="#5a5a5a" stroke-width="0.7" rx="0"/>
<rect x="80.30" y="315.30" width="18.50" height="3.20" fill="none" stroke="#5a5a5a" stroke-width="0.7" rx="0"/>
<polyline points="118.50,260.50 118.50,303.50" fill="none" stroke="#000" stroke-width="1.5" stroke-linejoin="miter" />
<polyline points="106.80,325.50 111.30,309.50" fill="none" stroke="#141414" stroke-width="2.2" stroke-linejoin="miter" />
<polyline points="112.30,325.50 116.80,309.50" fill="none" stroke="#141414" stroke-width="2.2" stroke-linejoin="miter" />
<polyline points="118.30,325.50 121.30,314.50" fill="none" stroke="#1a1a1a" stroke-width="1.5" stroke-linejoin="miter" />
<polyline points="92.30,342.50 104.80,337.00" fill="none" stroke="#000" stroke-width="2.0" stroke-linejoin="miter" />
<polyline points="108.30,329.50 112.30,321.50" fill="none" stroke="#1a1a1a" stroke-width="1.0" stroke-linejoin="miter" />
<polyline points="112.30,329.50 116.30,321.50" fill="none" stroke="#1a1a1a" stroke-width="1.0" stroke-linejoin="miter" />
<rect x="125.90" y="260.50" width="8.50" height="24.00" fill="#000" />
<rect x="125.90" y="306.50" width="8.50" height="18.00" fill="#000" />
<rect x="134.40" y="260.50" width="57.50" height="67.00" fill="#000" />
<rect x="153.90" y="261.70" width="38.00" height="11.30" fill="#353535" />
<rect x="154.40" y="273.00" width="37.00" height="51.00" fill="none" stroke="#484848" stroke-width="0.8" rx="0"/>
<rect x="156.90" y="276.50" width="10.00" height="45.00" fill="none" stroke="#6e6e6e" stroke-width="0.8" rx="0"/>
<rect x="167.90" y="277.50" width="18.50" height="3.20" fill="none" stroke="#5a5a5a" stroke-width="0.7" rx="0"/>
<rect x="167.90" y="282.90" width="18.50" height="3.20" fill="none" stroke="#5a5a5a" stroke-width="0.7" rx="0"/>
<rect x="167.90" y="288.30" width="18.50" height="3.20" fill="none" stroke="#5a5a5a" stroke-width="0.7" rx="0"/>
<rect x="167.90" y="293.70" width="18.50" height="3.20" fill="none" stroke="#5a5a5a" stroke-width="0.7" rx="0"/>
<rect x="167.90" y="299.10" width="18.50" height="3.20" fill="none" stroke="#5a5a5a" stroke-width="0.7" rx="0"/>
<rect x="167.90" y="304.50" width="18.50" height="3.20" fill="none" stroke="#5a5a5a" stroke-width="0.7" rx="0"/>
<rect x="167.90" y="309.90" width="18.50" height="3.20" fill="none" stroke="#5a5a5a" stroke-width="0.7" rx="0"/>
<rect x="167.90" y="315.30" width="18.50" height="3.20" fill="none" stroke="#5a5a5a" stroke-width="0.7" rx="0"/>
<polyline points="206.10,260.50 206.10,303.50" fill="none" stroke="#000" stroke-width="1.5" stroke-linejoin="miter" />
<polyline points="194.40,325.50 198.90,309.50" fill="none" stroke="#141414" stroke-width="2.2" stroke-linejoin="miter" />
<polyline points="199.90,325.50 204.40,309.50" fill="none" stroke="#141414" stroke-width="2.2" stroke-linejoin="miter" />
<polyline points="205.90,325.50 208.90,314.50" fill="none" stroke="#1a1a1a" stroke-width="1.5" stroke-linejoin="miter" />
<polyline points="179.90,342.50 192.40,337.00" fill="none" stroke="#000" stroke-width="2.0" stroke-linejoin="miter" />
<polyline points="195.90,329.50 199.90,321.50" fill="none" stroke="#1a1a1a" stroke-width="1.0" stroke-linejoin="miter" />
<polyline points="199.90,329.50 203.90,321.50" fill="none" stroke="#1a1a1a" stroke-width="1.0" stroke-linejoin="miter" />
<rect x="213.50" y="260.50" width="8.50" height="24.00" fill="#000" />
<rect x="213.50" y="306.50" width="8.50" height="18.00" fill="#000" />
<rect x="222.00" y="260.50" width="57.50" height="67.00" fill="#000" />
<rect x="241.50" y="261.70" width="38.00" height="11.30" fill="#353535" />
<rect x="242.00" y="273.00" width="37.00" height="51.00" fill="none" stroke="#484848" stroke-width="0.8" rx="0"/>
<rect x="244.50" y="276.50" width="10.00" height="45.00" fill="none" stroke="#6e6e6e" stroke-width="0.8" rx="0"/>
<rect x="255.50" y="277.50" width="18.50" height="3.20" fill="none" stroke="#5a5a5a" stroke-width="0.7" rx="0"/>
<rect x="255.50" y="282.90" width="18.50" height="3.20" fill="none" stroke="#5a5a5a" stroke-width="0.7" rx="0"/>
<rect x="255.50" y="288.30" width="18.50" height="3.20" fill="none" stroke="#5a5a5a" stroke-width="0.7" rx="0"/>
<rect x="255.50" y="293.70" width="18.50" height="3.20" fill="none" stroke="#5a5a5a" stroke-width="0.7" rx="0"/>
<rect x="255.50" y="299.10" width="18.50" height="3.20" fill="none" stroke="#5a5a5a" stroke-width="0.7" rx="0"/>
<rect x="255.50" y="304.50" width="18.50" height="3.20" fill="none" stroke="#5a5a5a" stroke-width="0.7" rx="0"/>
<rect x="255.50" y="309.90" width="18.50" height="3.20" fill="none" stroke="#5a5a5a" stroke-width="0.7" rx="0"/>
<rect x="255.50" y="315.30" width="18.50" height="3.20" fill="none" stroke="#5a5a5a" stroke-width="0.7" rx="0"/>
<polyline points="293.70,260.50 293.70,303.50" fill="none" stroke="#000" stroke-width="1.5" stroke-linejoin="miter" />
<polyline points="282.00,325.50 286.50,309.50" fill="none" stroke="#141414" stroke-width="2.2" stroke-linejoin="miter" />
<polyline points="287.50,325.50 292.00,309.50" fill="none" stroke="#141414" stroke-width="2.2" stroke-linejoin="miter" />
<polyline points="293.50,325.50 296.50,314.50" fill="none" stroke="#1a1a1a" stroke-width="1.5" stroke-linejoin="miter" />
<polyline points="267.50,342.50 280.00,337.00" fill="none" stroke="#000" stroke-width="2.0" stroke-linejoin="miter" />
<polyline points="283.50,329.50 287.50,321.50" fill="none" stroke="#1a1a1a" stroke-width="1.0" stroke-linejoin="miter" />
<polyline points="287.50,329.50 291.50,321.50" fill="none" stroke="#1a1a1a" stroke-width="1.0" stroke-linejoin="miter" />
<rect x="301.10" y="260.50" width="8.50" height="24.00" fill="#000" />
<rect x="301.10" y="306.50" width="8.50" height="18.00" fill="#000" />
<rect x="309.60" y="260.50" width="57.50" height="67.00" fill="#000" />
<rect x="331.60" y="260.50" width="50.50" height="10.50" fill="#353535" />
<rect x="310.60" y="260.50" width="21.50" height="61.50" fill="none" stroke="#707070" stroke-width="0.8" rx="0"/>
<rect x="334.60" y="276.50" width="9.00" height="45.00" fill="none" stroke="#606060" stroke-width="0.8" rx="0"/>
<rect x="346.10" y="276.50" width="17.50" height="45.00" fill="none" stroke="#404040" stroke-width="0.8" rx="0"/>
<polyline points="381.30,260.50 381.30,303.50" fill="none" stroke="#000" stroke-width="1.5" stroke-linejoin="miter" />
<polyline points="369.60,325.50 374.10,309.50" fill="none" stroke="#141414" stroke-width="2.2" stroke-linejoin="miter" />
<polyline points="375.10,325.50 379.60,309.50" fill="none" stroke="#141414" stroke-width="2.2" stroke-linejoin="miter" />
<polyline points="381.10,325.50 384.10,314.50" fill="none" stroke="#1a1a1a" stroke-width="1.5" stroke-linejoin="miter" />
<polyline points="355.10,342.50 367.60,337.00" fill="none" stroke="#000" stroke-width="2.0" stroke-linejoin="miter" />
<polyline points="371.10,329.50 375.10,321.50" fill="none" stroke="#1a1a1a" stroke-width="1.0" stroke-linejoin="miter" />
<polyline points="375.10,329.50 379.10,321.50" fill="none" stroke="#1a1a1a" stroke-width="1.0" stroke-linejoin="miter" />
<rect x="388.70" y="260.50" width="8.50" height="24.00" fill="#000" />
<rect x="388.70" y="306.50" width="8.50" height="18.00" fill="#000" />
<rect x="397.20" y="260.50" width="57.50" height="67.00" fill="#000" />
<rect x="416.70" y="261.70" width="38.00" height="11.30" fill="#353535" />
<rect x="417.20" y="273.00" width="37.00" height="51.00" fill="none" stroke="#484848" stroke-width="0.8" rx="0"/>
<rect x="419.70" y="276.50" width="10.00" height="45.00" fill="none" stroke="#6e6e6e" stroke-width="0.8" rx="0"/>
<rect x="430.70" y="277.50" width="18.50" height="3.20" fill="none" stroke="#5a5a5a" stroke-width="0.7" rx="0"/>
<rect x="430.70" y="282.90" width="18.50" height="3.20" fill="none" stroke="#5a5a5a" stroke-width="0.7" rx="0"/>
<rect x="430.70" y="288.30" width="18.50" height="3.20" fill="none" stroke="#5a5a5a" stroke-width="0.7" rx="0"/>
<rect x="430.70" y="293.70" width="18.50" height="3.20" fill="none" stroke="#5a5a5a" stroke-width="0.7" rx="0"/>
<rect x="430.70" y="299.10" width="18.50" height="3.20" fill="none" stroke="#5a5a5a" stroke-width="0.7" rx="0"/>
<rect x="430.70" y="304.50" width="18.50" height="3.20" fill="none" stroke="#5a5a5a" stroke-width="0.7" rx="0"/>
<rect x="430.70" y="309.90" width="18.50" height="3.20" fill="none" stroke="#5a5a5a" stroke-width="0.7" rx="0"/>
<rect x="430.70" y="315.30" width="18.50" height="3.20" fill="none" stroke="#5a5a5a" stroke-width="0.7" rx="0"/>
<polyline points="468.90,260.50 468.90,303.50" fill="none" stroke="#000" stroke-width="1.5" stroke-linejoin="miter" />
<polyline points="457.20,325.50 461.70,309.50" fill="none" stroke="#141414" stroke-width="2.2" stroke-linejoin="miter" />
<polyline points="462.70,325.50 467.20,309.50" fill="none" stroke="#141414" stroke-width="2.2" stroke-linejoin="miter" />
<polyline points="468.70,325.50 471.70,314.50" fill="none" stroke="#1a1a1a" stroke-width="1.5" stroke-linejoin="miter" />
<polyline points="442.70,342.50 455.20,337.00" fill="none" stroke="#000" stroke-width="2.0" stroke-linejoin="miter" />
<polyline points="458.70,329.50 462.70,321.50" fill="none" stroke="#1a1a1a" stroke-width="1.0" stroke-linejoin="miter" />
<polyline points="462.70,329.50 466.70,321.50" fill="none" stroke="#1a1a1a" stroke-width="1.0" stroke-linejoin="miter" />
<polyline points="58.00,75.50 94.00,75.50 102.70,73.00 180.00,73.00 189.00,70.80 271.00,70.80 279.00,67.50 360.00,67.50 368.00,64.50 393.00,64.50" fill="none" stroke="#b8643c" stroke-width="1.5" stroke-linejoin="miter" />
<polyline points="102.70,75.80 179.00,75.50 189.00,73.00 270.00,73.00 278.00,70.50 360.00,70.50 368.00,68.00 393.00,68.00" fill="none" stroke="#b4b4b4" stroke-width="1.0" stroke-linejoin="miter" />
<polyline points="176.00,77.50 190.00,75.50" fill="none" stroke="#000" stroke-width="2.2" stroke-linejoin="miter" />
<polyline points="368.00,77.40 393.00,77.40" fill="none" stroke="#c8683e" stroke-width="1.0" stroke-linejoin="miter" />
<polyline points="58.00,84.00 190.00,84.00 192.00,83.30 368.00,83.30 370.00,84.00 393.00,84.00" fill="none" stroke="#d4d4d4" stroke-width="1.1" stroke-linejoin="miter" />
<polyline points="143.40,75.60 143.40,84.00" fill="none" stroke="#b4b4b4" stroke-width="1.0" stroke-linejoin="miter" />
<polyline points="234.30,73.00 234.30,84.00" fill="none" stroke="#b4b4b4" stroke-width="1.0" stroke-linejoin="miter" />
<polyline points="236.30,73.00 236.30,84.00" fill="none" stroke="#c8683e" stroke-width="0.8" stroke-linejoin="miter" />
<polyline points="324.60,70.50 324.60,85.50" fill="none" stroke="#b4b4b4" stroke-width="1.0" stroke-linejoin="miter" />
<polyline points="326.80,70.50 326.80,85.50" fill="none" stroke="#c8683e" stroke-width="0.8" stroke-linejoin="miter" />
<polyline points="290.50,53.00 286.60,65.00 286.60,140.00 284.00,150.00 284.00,252.00 281.50,262.00 280.50,286.00" fill="none" stroke="#78b878" stroke-width="1.1" stroke-linejoin="miter" />
<polyline points="286.70,116.50 310.00,116.50" fill="none" stroke="#78b878" stroke-width="1.0" stroke-linejoin="miter" />
<polyline points="242.60,89.30 286.70,89.30" fill="none" stroke="#78b878" stroke-width="1.0" stroke-linejoin="miter" />
<polyline points="382.00,64.50 382.00,143.00 379.40,151.00 379.40,228.00 377.00,240.00 377.00,287.00" fill="none" stroke="#b0683e" stroke-width="1.0" stroke-linejoin="miter" />
<polyline points="331.60,96.60 382.00,96.60" fill="none" stroke="#b0683e" stroke-width="1.0" stroke-linejoin="miter" />
<polyline points="382.00,124.00 393.00,124.00" fill="none" stroke="#b0683e" stroke-width="1.0" stroke-linejoin="miter" />
<polyline points="331.60,182.00 379.40,182.00" fill="none" stroke="#b0683e" stroke-width="1.0" stroke-linejoin="miter" />
<polyline points="379.40,209.60 393.00,209.60" fill="none" stroke="#b0683e" stroke-width="1.0" stroke-linejoin="miter" />
<polyline points="331.60,267.40 377.00,267.40" fill="none" stroke="#b0683e" stroke-width="1.0" stroke-linejoin="miter" />
<polyline points="242.50,175.00 284.20,175.00" fill="none" stroke="#78b878" stroke-width="1.0" stroke-linejoin="miter" />
<polyline points="242.50,175.00 240.00,180.00" fill="none" stroke="#78b878" stroke-width="1.0" stroke-linejoin="miter" />
<polyline points="284.20,202.50 310.00,202.50" fill="none" stroke="#78b878" stroke-width="1.0" stroke-linejoin="miter" />
<polyline points="284.20,252.00 358.00,252.00 367.00,248.60 393.00,248.60" fill="none" stroke="#78b878" stroke-width="1.0" stroke-linejoin="miter" />
<polyline points="318.80,252.00 318.80,263.40 308.00,286.00" fill="none" stroke="#78b878" stroke-width="1.0" stroke-linejoin="miter" />
<polyline points="170.30,144.00 170.30,276.00" fill="none" stroke="#e6e6e6" stroke-width="0.9" stroke-linejoin="miter" />
<polyline points="143.60,84.00 154.50,98.70" fill="none" stroke="#c8683e" stroke-width="1.3" stroke-linejoin="miter" />
<polyline points="154.50,98.70 189.00,98.70 189.00,127.50" fill="none" stroke="#e0a08c" stroke-width="1.6" stroke-linejoin="miter" />
<polyline points="189.00,127.50 189.00,145.00" fill="none" stroke="#d8a8a8" stroke-width="1.0" stroke-linejoin="miter" />
<polyline points="154.50,98.70 146.20,116.20 156.00,135.70 161.20,127.50 169.50,126.00" fill="none" stroke="#d07448" stroke-width="1.2" stroke-linejoin="miter" />
<polyline points="151.50,108.70 156.00,114.00 168.70,116.20" fill="none" stroke="#b8c8d8" stroke-width="0.9" stroke-linejoin="miter" />
<polyline points="149.20,115.50 156.00,122.20 159.00,129.70 168.00,142.50" fill="none" stroke="#b8c8d8" stroke-width="0.9" stroke-linejoin="miter" />
<rect x="168.70" y="105.00" width="18.00" height="3.70" fill="none" stroke="#5a4a4a" stroke-width="0.9" rx="0.6"/>
<rect x="168.70" y="114.00" width="18.00" height="4.50" fill="none" stroke="#d8d8d8" stroke-width="0.9" rx="0.6"/>
<rect x="168.70" y="125.00" width="18.00" height="4.70" fill="none" stroke="#d8d8d8" stroke-width="0.9" rx="0.6"/>
<rect x="168.70" y="135.70" width="18.00" height="4.50" fill="none" stroke="#d8d8d8" stroke-width="0.9" rx="0.6"/>
<rect x="168.70" y="141.70" width="18.00" height="3.80" fill="none" stroke="#d8d8d8" stroke-width="0.9" rx="0.6"/>
<rect x="186.00" y="138.00" width="3.00" height="4.50" fill="none" stroke="#d8d8d8" stroke-width="0.7" rx="0"/>
<polyline points="128.00,142.50 169.50,147.70 188.00,147.20" fill="none" stroke="#9a6aa8" stroke-width="1.0" stroke-linejoin="miter" />
<rect x="128.00" y="141.50" width="3.50" height="2.20" fill="#a080b8" />
<polyline points="128.00,231.00 153.00,234.30 189.00,233.50" fill="none" stroke="#9a6aa8" stroke-width="1.0" stroke-linejoin="miter" />
<rect x="128.00" y="230.00" width="3.50" height="2.20" fill="#a080b8" />
<polyline points="216.00,231.00 256.00,235.00 274.00,234.00" fill="none" stroke="#9a6aa8" stroke-width="1.0" stroke-linejoin="miter" />
<rect x="216.00" y="230.00" width="3.50" height="2.20" fill="#a080b8" />
<rect x="127.50" y="90.00" width="5.00" height="5.50" fill="#5fd8a8" />
<rect x="127.50" y="99.00" width="5.00" height="1.60" fill="#d0d0d0" />
<polyline points="223.40,84.00 242.60,99.80 276.00,99.80 276.00,118.00" fill="none" stroke="#e6e6e6" stroke-width="1.1" stroke-linejoin="miter" />
<polyline points="242.60,99.80 238.30,110.30 244.40,118.20 248.80,110.30 256.70,105.00" fill="none" stroke="#e6e6e6" stroke-width="1.0" stroke-linejoin="miter" />
<polyline points="222.00,87.00 243.50,126.90 256.70,110.30" fill="none" stroke="#d8d8d8" stroke-width="1.0" stroke-linejoin="miter" />
<polyline points="221.60,89.30 243.50,119.00 247.00,118.00" fill="none" stroke="#4a68c0" stroke-width="1.0" stroke-linejoin="miter" />
<polyline points="221.60,94.50 244.40,136.50 256.70,112.90" fill="none" stroke="#c8b04a" stroke-width="1.1" stroke-linejoin="miter" />
<rect x="257.50" y="102.40" width="17.00" height="3.50" fill="none" stroke="#dedede" stroke-width="1.0" rx="0.6"/>
<rect x="257.50" y="107.60" width="17.00" height="3.50" fill="none" stroke="#dedede" stroke-width="1.0" rx="0.6"/>
<rect x="257.50" y="113.80" width="17.00" height="4.40" fill="none" stroke="#dedede" stroke-width="1.0" rx="0.6"/>
<polyline points="217.30,142.70 241.80,147.00 272.40,147.00" fill="none" stroke="#9a6aa8" stroke-width="1.0" stroke-linejoin="miter" />
<rect x="216.40" y="87.50" width="5.00" height="2.60" fill="#5fd8b4" />
<rect x="216.40" y="92.80" width="5.00" height="1.70" fill="#c8b04a" />
<rect x="216.40" y="95.40" width="5.00" height="1.70" fill="#d8c8a0" />
<polyline points="154.50,187.20 188.70,187.20 189.50,232.00" fill="none" stroke="#66e4bc" stroke-width="1.7" stroke-linejoin="miter" />
<polyline points="154.50,187.20 145.60,206.00 155.30,223.80" fill="none" stroke="#66e4bc" stroke-width="1.6" stroke-linejoin="miter" />
<polyline points="145.60,206.00 155.30,208.30" fill="none" stroke="#4a68c0" stroke-width="0.8" stroke-linejoin="miter" />
<polyline points="155.30,208.30 167.50,193.70" fill="none" stroke="#4a68c0" stroke-width="0.8" stroke-linejoin="miter" />
<polyline points="155.30,208.30 167.50,199.00" fill="none" stroke="#4a68c0" stroke-width="0.8" stroke-linejoin="miter" />
<polyline points="155.30,208.30 167.50,220.00" fill="none" stroke="#4a68c0" stroke-width="0.8" stroke-linejoin="miter" />
<polyline points="155.30,223.80 167.50,215.00" fill="none" stroke="#4a68c0" stroke-width="0.8" stroke-linejoin="miter" />
<polyline points="155.30,223.80 167.50,226.00" fill="none" stroke="#4a68c0" stroke-width="0.8" stroke-linejoin="miter" />
<polyline points="155.30,223.80 167.50,231.00" fill="none" stroke="#4a68c0" stroke-width="0.8" stroke-linejoin="miter" />
<polyline points="150.00,197.00 167.50,204.00" fill="none" stroke="#4a68c0" stroke-width="0.8" stroke-linejoin="miter" />
<rect x="170.00" y="191.30" width="15.50" height="3.40" fill="#8a8a8a" stroke="#e0e0e0" stroke-width="0.8" rx="1.2"/>
<circle cx="167.8" cy="193.00" r="1.1" fill="none" stroke="#c8d0a8" stroke-width="0.6"/>
<rect x="170.00" y="196.70" width="15.50" height="3.40" fill="#8a8a8a" stroke="#e0e0e0" stroke-width="0.8" rx="1.2"/>
<circle cx="167.8" cy="198.40" r="1.1" fill="none" stroke="#c8d0a8" stroke-width="0.6"/>
<rect x="170.00" y="202.10" width="15.50" height="3.40" fill="#8a8a8a" stroke="#e0e0e0" stroke-width="0.8" rx="1.2"/>
<circle cx="167.8" cy="203.80" r="1.1" fill="none" stroke="#c8d0a8" stroke-width="0.6"/>
<rect x="170.00" y="207.50" width="15.50" height="3.40" fill="#8a8a8a" stroke="#e0e0e0" stroke-width="0.8" rx="1.2"/>
<circle cx="167.8" cy="209.20" r="1.1" fill="none" stroke="#c8d0a8" stroke-width="0.6"/>
<rect x="170.00" y="212.90" width="15.50" height="3.40" fill="#8a8a8a" stroke="#e0e0e0" stroke-width="0.8" rx="1.2"/>
<circle cx="167.8" cy="214.60" r="1.1" fill="none" stroke="#c8d0a8" stroke-width="0.6"/>
<rect x="170.00" y="218.30" width="15.50" height="3.40" fill="#8a8a8a" stroke="#e0e0e0" stroke-width="0.8" rx="1.2"/>
<circle cx="167.8" cy="220.00" r="1.1" fill="none" stroke="#c8d0a8" stroke-width="0.6"/>
<rect x="170.00" y="223.70" width="15.50" height="3.40" fill="#8a8a8a" stroke="#e0e0e0" stroke-width="0.8" rx="1.2"/>
<circle cx="167.8" cy="225.40" r="1.1" fill="none" stroke="#c8d0a8" stroke-width="0.6"/>
<rect x="170.00" y="229.10" width="15.50" height="3.40" fill="#8a8a8a" stroke="#e0e0e0" stroke-width="0.8" rx="1.2"/>
<circle cx="167.8" cy="230.80" r="1.1" fill="none" stroke="#c8d0a8" stroke-width="0.6"/>
<rect x="127.50" y="175.60" width="5.50" height="2.90" fill="#485068" />
<rect x="127.50" y="180.40" width="5.50" height="2.80" fill="#e0e0e0" />
<rect x="127.50" y="185.00" width="5.50" height="4.00" fill="#788a68" />
<rect x="127.50" y="192.70" width="5.50" height="3.80" fill="#d8d0c8" />
<polyline points="242.30,187.50 278.00,187.50 278.00,232.00" fill="none" stroke="#c8b04a" stroke-width="1.1" stroke-linejoin="miter" />
<polyline points="242.30,187.50 237.70,197.90 244.60,208.20 256.00,193.30" fill="none" stroke="#c8b04a" stroke-width="1.0" stroke-linejoin="miter" />
<polyline points="219.30,185.20 256.00,233.50" fill="none" stroke="#4a68c0" stroke-width="1.0" stroke-linejoin="miter" />
<polyline points="219.30,185.20 243.50,223.20 256.00,210.50" fill="none" stroke="#70c090" stroke-width="1.0" stroke-linejoin="miter" />
<rect x="256.00" y="191.00" width="18.50" height="3.40" fill="none" stroke="#e0e0e0" stroke-width="1.0" rx="0.6"/>
<rect x="256.00" y="207.00" width="18.50" height="4.70" fill="none" stroke="#e0e0e0" stroke-width="1.0" rx="0.6"/>
<rect x="256.00" y="229.00" width="18.50" height="4.50" fill="none" stroke="#e0e0e0" stroke-width="1.0" rx="0.6"/>
<rect x="215.50" y="176.00" width="5.50" height="2.50" fill="#e0c8c8" />
<rect x="215.50" y="184.00" width="5.50" height="2.60" fill="#5fd8b4" />
<rect x="215.50" y="190.00" width="5.50" height="2.20" fill="#d8a8a8" />
<rect x="215.50" y="195.30" width="5.50" height="1.50" fill="#e0e0e0" />
<polyline points="150.00,287.00 155.00,276.00 188.30,276.00 188.30,287.00" fill="none" stroke="#f0f0f0" stroke-width="1.7" stroke-linejoin="miter" />
<rect x="162.00" y="279.00" width="8.00" height="8.00" fill="none" stroke="#909090" stroke-width="0.8" rx="0"/>
<rect x="172.00" y="279.00" width="15.00" height="7.00" fill="#a0a0a0" />
<rect x="127.50" y="264.00" width="5.50" height="3.00" fill="#909090" />
<rect x="127.50" y="270.00" width="5.50" height="2.00" fill="#e0e0e0" />
<rect x="127.50" y="275.50" width="5.50" height="2.00" fill="#405848" />
<rect x="127.50" y="279.00" width="5.50" height="2.00" fill="#806a50" />
<rect x="127.50" y="282.70" width="5.50" height="2.80" fill="#90d0a8" />
<rect x="215.00" y="270.00" width="4.00" height="2.00" fill="#e0e0e0" />
<rect x="215.00" y="279.00" width="4.00" height="3.00" fill="#90d0a8" />
<rect x="302.50" y="88.00" width="4.00" height="2.00" fill="#d0d0c0" />
<rect x="302.50" y="97.00" width="4.00" height="1.20" fill="#e0e0e0" />
<rect x="302.50" y="142.00" width="4.00" height="2.00" fill="#b090c0" />
<rect x="302.50" y="184.00" width="4.00" height="2.00" fill="#d0d0c0" />
<rect x="302.50" y="190.00" width="4.00" height="1.50" fill="#e0e0e0" />
<rect x="302.50" y="229.00" width="4.00" height="2.00" fill="#b090c0" />
<rect x="128.50" y="53.40" width="5.00" height="2.50" fill="#a080b8" />
<path d="M380.5,193 L380.5,201.5 L382.3,199.8 L383.6,202.6 L384.6,202.1 L383.4,199.4 L385.8,199.2 Z" fill="#fff" stroke="#222" stroke-width="0.5"/>
</svg>
  </div>
  <!-- console tab -->
  <div class="tab" style="left:5.5px;top:290px;width:34px;height:15px"></div><div class="a" style="left:8.7px;top:295px;font-size:7px;line-height:7px;color:#505050">Console</div>
  <div class="a" style="left:5.5px;top:304.5px;width:337.5px;height:78.3px;border:1px solid #d3d1ce;border-radius:0 2px 2px 2px;background:#f2f1f0"></div>
  <div class="a" style="left:10.5px;top:307.5px;width:326.5px;height:53px;background:#fff;border:1px solid #d8d6d3;overflow:hidden"></div>
  <div class="a mono" style="left:13px;top:311.3px;width:316px;height:48.7px;overflow:hidden;font-size:8px;letter-spacing:-0.41px;line-height:8.45px;color:#262626">
    <div style="margin-top:-2.8px">Info: visited 73810 PIPs (0.01% revisits, 0.02% overtime revisits).</div>
    <div>Info: final tns with respect to arc budgets: 0.000000 ns (0 nets, 0</div>
    <div>arcs)</div>
    <div>Info: Checksum: 0xa4786aa9</div>
    <div>Routing design successful.</div>
  </div>
  <div class="a" style="left:330px;top:309px;width:7px;height:50px;background:#e6e5e3;border:1px solid #d6d4d1;border-radius:3px"></div>
  <div class="a" style="left:330.5px;top:337.8px;width:6px;height:15.4px;background:#fafafa;border:1px solid #c4c2bf;border-radius:3px"></div>
  <div class="a" style="left:331.8px;top:312px;width:0;height:0;border-left:1.6px solid transparent;border-right:1.6px solid transparent;border-bottom:2px solid #777"></div>
  <div class="a" style="left:331.8px;top:355px;width:0;height:0;border-left:1.6px solid transparent;border-right:1.6px solid transparent;border-top:2px solid #777"></div>
  <div class="a" style="left:10.5px;top:362.7px;width:326.5px;height:14.5px;background:#fff;border:1px solid #cac8c5;border-radius:2px"></div>
  <div class="a mono" style="left:13px;top:366.3px;font-size:7px;line-height:7px;letter-spacing:-0.2px;color:#a0a0a0">&gt;&gt;&gt;</div>
  <!-- right panel -->
  <div class="a" style="left:346px;top:39px;width:144px;height:11.5px;background:#fff;border:1px solid #d6d4d1;border-radius:2px"></div>
  <div class="a" style="left:360.3px;top:41px;font-size:7px;line-height:7px;color:#a4a4a4">Search...</div>
  <svg class="a" style="left:346px;top:38px" width="20" height="14" viewBox="398 38 20 14"><circle cx="403.5" cy="43.8" r="2.2" fill="none" stroke="#b8aa9c" stroke-width="0.9"/><path d="M405.1,45.4 L407.3,47.6" stroke="#9a8a7a" stroke-width="1.3"/></svg>
<div class="a" style="left:345px;top:53px;width:146px;height:153px;background:#fff;border:1px solid #d2d0cd;overflow:hidden">
<div class="a" style="left:0;top:0;width:145px;height:13px;background:linear-gradient(#fafafa,#ecebea);border-bottom:1px solid #dad8d5;font-size:7.5px;color:#5c5c5c;padding:2px 0 0 2px">Items</div>
<div class="a" style="left:0;top:141.5px;width:139px;height:10px;background:linear-gradient(#e4e3e1,#d4d3d1)"></div>
<div class="a tr" style="left:40.8px;top:13.40px">X9.Y11.sp12_h_r_1.->.X9.Y...</div>
<div class="a tr" style="left:29.3px;top:22.58px">Y13</div>
<div class="a arr" style="left:22.5px;top:25.68px"></div>
<div class="a tr" style="left:11.0px;top:31.76px">Nets</div>
<div class="a arr" style="left:3.0px;top:34.86px"></div>
<div class="a tr" style="left:20.8px;top:40.94px">clki</div>
<div class="a tr" style="left:20.8px;top:50.12px">$auto$alumacc.cc:474:replace_al...</div>
<div class="a tr" style="left:20.8px;top:59.30px">counter[8]</div>
<div class="a tr" style="left:20.8px;top:68.48px">counter[7]</div>
<div class="a tr" style="left:20.8px;top:77.66px">$auto$alumacc.cc:474:replace_al...</div>
<div class="a tr" style="left:20.8px;top:86.84px">$auto$alumacc.cc:474:replace_al...</div>
<div class="a tr" style="left:20.8px;top:96.02px">counter[5]</div>
<div class="a tr" style="left:20.8px;top:105.20px">$auto$alumacc.cc:474:replace_al...</div>
<div class="a tr" style="left:20.8px;top:114.38px">counter[4]</div>
<div class="a tr" style="left:20.8px;top:123.56px">counter[3]</div>
<div class="a tr" style="left:20.8px;top:132.74px">$auto$alumacc.cc:474:replace_al...</div>
<div class="a tr" style="left:20.8px;top:141.92px">counter[25]</div>
<div class="a" style="left:138px;top:1px;width:7px;height:150px;background:#e9e8e6;border-left:1px solid #dedcd9"></div>
<div class="a" style="left:139px;top:128px;width:5px;height:17px;background:#fbfbfb;border:1px solid #c5c3c0;border-radius:3px"></div><div class="a" style="left:140px;top:3px;width:0;height:0;border-left:1.6px solid transparent;border-right:1.6px solid transparent;border-bottom:2px solid #777"></div><div class="a" style="left:140px;top:147px;width:0;height:0;border-left:1.6px solid transparent;border-right:1.6px solid transparent;border-top:2px solid #777"></div>
</div>
<div class="a" style="left:345px;top:228px;width:146px;height:155px;background:#fff;border:1px solid #d2d0cd;overflow:hidden">
<div class="a" style="left:0;top:0;width:139px;height:12px;background:linear-gradient(#fafafa,#ecebea);border-bottom:1px solid #dad8d5"></div>
<div class="a" style="left:68px;top:1px;width:1px;height:10px;background:#dad8d5"></div>
<div class="a tr" style="left:2px;top:2px;color:#505050">Property</div>
<div class="a tr" style="left:71px;top:2px;color:#505050">Value</div>
<div class="a" style="left:0;top:11.8px;width:139px;height:10.2px;background:#bdbdbd"></div>
<div class="a tr" style="left:11.0px;top:12.3px;color:#f4f4f4">Net</div>
<div class="a arr" style="left:2.0px;top:15.4px"></div>
<div class="a" style="left:0;top:22.2px;width:139px;height:10.2px;background:#ededec"></div>
<div class="a tr" style="left:20.8px;top:22.7px;color:#3c3c3c">Name</div>
<div class="a tr" style="left:71.5px;top:22.7px">counter[25]</div>
<div class="a" style="left:0;top:32.6px;width:139px;height:10.2px;background:#bdbdbd"></div>
<div class="a tr" style="left:20.0px;top:33.1px;color:#f4f4f4">Driver</div>
<div class="a arr" style="left:12.7px;top:36.2px"></div>
<div class="a" style="left:0;top:42.7px;width:139px;height:10.2px;background:#ededec"></div>
<div class="a tr" style="left:30.7px;top:43.2px;color:#3c3c3c">Port</div>
<div class="a tr" style="left:71.5px;top:43.2px">O</div>
<div class="a" style="left:0;top:52.8px;width:139px;height:10.2px;background:#ffffff"></div>
<div class="a tr" style="left:30.7px;top:53.3px;color:#3c3c3c">Budget</div>
<div class="a tr" style="left:71.5px;top:53.3px">0.00</div>
<div class="a" style="left:0;top:63.0px;width:139px;height:10.2px;background:#ededec"></div>
<div class="a tr" style="left:30.7px;top:63.5px;color:#3c3c3c">Cell</div>
<div class="a tr" style="left:71.5px;top:63.5px">$auto$alumacc.cc...</div>
<div class="a" style="left:0;top:73.1px;width:139px;height:10.2px;background:#bdbdbd"></div>
<div class="a tr" style="left:20.0px;top:73.6px;color:#f4f4f4">Users</div>
<div class="a arr" style="left:12.7px;top:76.7px"></div>
<div class="a" style="left:0;top:83.2px;width:139px;height:10.2px;background:#bdbdbd"></div>
<div class="a tr" style="left:30.3px;top:83.7px;color:#f4f4f4">I2</div>
<div class="a arr" style="left:23.0px;top:86.8px"></div>
<div class="a" style="left:0;top:93.4px;width:139px;height:10.2px;background:#ffffff"></div>
<div class="a tr" style="left:40.0px;top:93.9px;color:#3c3c3c">Port</div>
<div class="a tr" style="left:71.5px;top:93.9px">I2</div>
<div class="a" style="left:0;top:103.5px;width:139px;height:10.2px;background:#ededec"></div>
<div class="a tr" style="left:40.0px;top:104.0px;color:#3c3c3c">Budget</div>
<div class="a tr" style="left:71.5px;top:104.0px">82793.00</div>
<div class="a" style="left:0;top:113.7px;width:139px;height:10.2px;background:#ffffff"></div>
<div class="a tr" style="left:40.0px;top:114.2px;color:#3c3c3c">Cell</div>
<div class="a tr" style="left:71.5px;top:114.2px">$auto$alumacc.cc...</div>
<div class="a" style="left:0;top:123.6px;width:139px;height:10.2px;background:#bdbdbd"></div>
<div class="a tr" style="left:30.3px;top:124.1px;color:#f4f4f4">I0</div>
<div class="a arr" style="left:23.0px;top:127.2px"></div>
<div class="a" style="left:0;top:133.8px;width:139px;height:10.2px;background:#ffffff"></div>
<div class="a tr" style="left:40.0px;top:134.3px;color:#3c3c3c">Port</div>
<div class="a tr" style="left:71.5px;top:134.3px">I0</div>
<div class="a" style="left:0;top:143.9px;width:139px;height:10.2px;background:#ededec"></div>
<div class="a tr" style="left:40.0px;top:144.4px;color:#3c3c3c">Budget</div>
<div class="a tr" style="left:71.5px;top:144.4px">82793.00</div>
<div class="a" style="left:138px;top:0;width:7px;height:153px;background:#e9e8e6;border-left:1px solid #dedcd9"></div>
<div class="a" style="left:138.5px;top:0.5px;width:6px;height:46px;background:#fbfbfb;border:1px solid #c5c3c0;border-radius:3px"></div><div class="a" style="left:140px;top:3px;width:0;height:0;border-left:1.6px solid transparent;border-right:1.6px solid transparent;border-bottom:2px solid #777"></div><div class="a" style="left:140px;top:148px;width:0;height:0;border-left:1.6px solid transparent;border-right:1.6px solid transparent;border-top:2px solid #777"></div>
</div>
  <div class="a" style="left:346px;top:389px;width:0"></div>
<svg class="a" style="left:0;top:0" width="496" height="400" viewBox="52 0 496 400">
<g fill="#5f88d8"><rect x="432.6" y="216.3" width="1.4" height="5.2"/><path d="M434.2,218.9 L437.8,216.2 V221.6 Z"/><path d="M437.8,216.2 L434.5,218.9 L437.8,221.6" fill="#5f88d8"/></g>
<g fill="#7a8cb0"><path d="M449.8,218.9 L453.5,216.2 V221.6 Z"/><rect x="453.2" y="216.6" width="1" height="4.6" opacity="0.6"/></g>
<g fill="#b0aeaa"><path d="M471.4,218.9 L467.7,216.2 V221.6 Z"/><rect x="467" y="216.6" width="1" height="4.6" opacity="0.6"/></g>
<g fill="#b0aeaa"><path d="M488.8,218.9 L485.1,216.2 V221.6 Z"/><rect x="489" y="216.3" width="1.3" height="5.2"/></g>
<path d="M502,216.5 L507,221.5 M507,216.5 L502,221.5" stroke="#e05866" stroke-width="1.4"/>
</svg>
  <!-- status bar -->
  <div class="a" style="left:0;top:388px;width:496px;height:1px;background:#e4e2df"></div>
  <div class="a" style="left:396.2px;top:389.5px;width:88px;height:9px;background:linear-gradient(#dedddb,#e6e5e3);border:1px solid #d2d0cd;border-radius:2px"></div>
  <div class="a" style="left:397.5px;top:391px;width:2.5px;height:6px;background:#e08a8a"></div>
  <div class="a" style="left:396.2px;top:391.2px;width:88px;font-size:6.6px;line-height:6.6px;color:#505050;text-align:center">0%</div>
</div>
<div id="win2">
  <div class="title2">
    <div class="btn" style="left:4px;background:radial-gradient(circle at 50% 40%,#f2835a,#dc5530 60%,#b8482a);box-shadow:0 0 0 0.5px #5a2a1a"></div>
    <div class="btn" style="left:13px;background:radial-gradient(circle at 50% 40%,#85847f,#6a6965 60%,#5c5b57);box-shadow:0 0 0 0.5px #2e2d2a"></div>
    <div class="btn" style="left:22px;background:radial-gradient(circle at 50% 45%,#6a6965 30%,#85847f 45%,#6a6965 60%,#5c5b57);box-shadow:0 0 0 0.5px #2e2d2a"></div>
    <div class="t">nextpnr-ice40 - Lattice HX1K ( tq144 )</div>
  </div>
  <div class="a" style="left:0;top:12.8px;width:496px;height:1.2px;background:#fbfbfa"></div>
  <!-- toolbar -->
<svg class="a" style="left:0;top:0" width="496" height="40" viewBox="52 0 496 40">
<defs>
<linearGradient id="gdoc" x1="0" y1="0" x2="0" y2="1"><stop offset="0" stop-color="#f4f6fa"/><stop offset="1" stop-color="#d8dee8"/></linearGradient>
<linearGradient id="gfold" x1="0" y1="0" x2="0" y2="1"><stop offset="0" stop-color="#f4e060"/><stop offset="1" stop-color="#e0a818"/></linearGradient>
<linearGradient id="gsave" x1="0" y1="0" x2="0" y2="1"><stop offset="0" stop-color="#a8b8d8"/><stop offset="1" stop-color="#c8d8f0"/></linearGradient>
<radialGradient id="ggray" cx="0.6" cy="0.35" r="0.7"><stop offset="0" stop-color="#d8d8d8"/><stop offset="0.5" stop-color="#a8a8a8"/><stop offset="1" stop-color="#c8c8c8"/></radialGradient>
</defs>
<!-- new -->
<path d="M61.5,17.5 H68.5 L70.5,19.5 V28.5 H61.5 Z" fill="url(#gdoc)" stroke="#a4aab4" stroke-width="0.9"/>
<path d="M68.5,17.5 V19.5 H70.5" fill="none" stroke="#9aa0aa" stroke-width="0.7"/>
<!-- open -->
<path d="M79.3,21.5 H83 L84,22.5 H88.6 V28 H79.3 Z" fill="url(#gfold)" stroke="#c89818" stroke-width="0.5"/>
<path d="M81,21 Q83,18 86.5,18.5 L88.5,21.5 L86.5,23.5 Z" fill="#3c9a2a"/>
<path d="M79.5,22 Q80.5,19.5 82.5,19.8" fill="none" stroke="#e87828" stroke-width="1.2"/>
<!-- save -->
<rect x="95.6" y="17.8" width="11" height="10.6" rx="1" fill="url(#gsave)" stroke="#8494b0" stroke-width="0.9"/>
<rect x="98" y="18" width="6" height="3" fill="#8898b8"/>
<rect x="97.5" y="23.3" width="7.3" height="4.5" fill="#dde8f8"/>
<!-- separator -->
<rect x="112" y="19" width="0.6" height="8" fill="#e4e2de"/>
<!-- gray icons -->
<radialGradient id="gsph" cx="0.65" cy="0.3" r="0.75"><stop offset="0" stop-color="#9a9a9a"/><stop offset="0.6" stop-color="#b8b8b8"/><stop offset="1" stop-color="#d4d4d4"/></radialGradient>
<circle cx="125" cy="23.2" r="4.6" fill="url(#gsph)"/>
<path d="M120.8,24.5 L124,22.3 L129,24 L128.5,27.5 L121.5,27.5 Z" fill="#ececec"/>
<path d="M121,25.5 L128.8,25.5" stroke="#b0b0b0" stroke-width="0.6"/>
<circle cx="142.2" cy="23.2" r="4.6" fill="url(#gsph)"/>
<path d="M138,24.5 L141.2,22.3 L146.2,24 L145.7,27.5 L138.7,27.5 Z" fill="#ececec"/>
<path d="M138.2,25.5 L146,25.5" stroke="#b0b0b0" stroke-width="0.6"/>
<path d="M156,26 L159,20 L162,23 L160,27 Z" fill="#d0d0d0" opacity="0.8"/>
<circle cx="176.5" cy="22.5" r="2.7" fill="#e8e8e8" stroke="#b4b4b4" stroke-width="0.9"/>
<path d="M174.5,25.5 H180.5 V27 H174.5 Z" fill="#a8a8a8"/>
<circle cx="194" cy="23.3" r="3.9" fill="#b0b0b0"/>
<circle cx="192.8" cy="22" r="1.8" fill="#c8c8c8"/>
<circle cx="209.5" cy="21.3" r="1.7" fill="#a8a8a8"/><circle cx="213.5" cy="21.3" r="1.7" fill="#b8b8b8"/>
<circle cx="209.5" cy="25.3" r="1.7" fill="#9c9c9c"/><circle cx="213.5" cy="25.3" r="1.7" fill="#a8a8a8"/>
<!-- save as -->
<rect x="224" y="17.5" width="10.3" height="10.8" rx="0.8" fill="#94acd4" stroke="#6a80a8" stroke-width="0.8"/>
<rect x="226.3" y="17.8" width="5.6" height="3" fill="#a8b8d0"/>
<rect x="225.6" y="22.3" width="7.2" height="5.3" fill="#f0d0e8"/>
<text x="229.2" y="26.8" font-size="3.6" font-family="Liberation Sans" font-weight="bold" fill="#c03070" text-anchor="middle">ABC</text>
<rect x="241.4" y="19" width="0.6" height="8" fill="#e8e6e2"/>
<!-- circles -->
<g fill="none" stroke="#c8c6c2" stroke-width="0.7">
<circle cx="252.8" cy="23.1" r="3.2"/><circle cx="270.8" cy="23.1" r="3.2"/><circle cx="287.8" cy="23.1" r="3.2"/>
</g>
<path d="M252,21.6 L254,23.1 L252,24.6 Z" fill="#9a9894"/>
<rect x="269.6" y="21.7" width="0.8" height="2.8" fill="#9a9894"/><rect x="271.2" y="21.7" width="0.8" height="2.8" fill="#9a9894"/>
<rect x="287" y="22.3" width="1.6" height="1.6" fill="#9a9894"/>
<rect x="300.6" y="19" width="0.6" height="8" fill="#e8e6e2"/>
<!-- zoom in -->
<circle cx="310.8" cy="22.8" r="2.4" fill="#c8d4a8" stroke="#98a080" stroke-width="1"/>
<circle cx="310.8" cy="22.8" r="1.1" fill="#88a060"/>
<path d="M312.6,24.6 L314.5,26.5" stroke="#8a9078" stroke-width="1.4"/>
<!-- zoom out -->
<circle cx="328.4" cy="22.8" r="2.4" fill="#f4d8cc" stroke="#d8a090" stroke-width="1"/>
<path d="M327.2,22.8 H329.6" stroke="#d07060" stroke-width="0.8"/>
<path d="M330.2,24.6 L332.1,26.5" stroke="#c88a80" stroke-width="1.4"/>
<!-- fit -->
<rect x="342.8" y="20" width="6.6" height="6.2" fill="#9cb0e0"/>
<path d="M342.8,20 L349.4,26.2 M349.4,20 L342.8,26.2" stroke="#5a6cb0" stroke-width="1.2"/>
<!-- square -->
<rect x="360.8" y="20" width="6" height="6" fill="#8ea4d8" stroke="#b4c4e8" stroke-width="0.6"/>
</svg>
  <!-- graphics tab -->
  <div class="tab" style="left:5.5px;top:38.5px;width:35px;height:15px"></div><div class="a" style="left:8.7px;top:42.9px;font-size:7px;line-height:7px;color:#505050">Graphics</div>
  <div class="gfx2">
    <svg  width="335" height="233.1" viewBox="58 53.4 335 233.1" style="display:block">
<rect x="58.00" y="53.00" width="335.00" height="234.00" fill="#353535" />
<rect x="58.00" y="66.50" width="335.00" height="0.60" fill="#2a2a2a" />
<rect x="58.00" y="70.00" width="335.00" height="0.60" fill="#2a2a2a" />
<rect x="58.00" y="73.50" width="335.00" height="0.60" fill="#2a2a2a" />
<rect x="58.00" y="77.00" width="335.00" height="0.60" fill="#2a2a2a" />
<rect x="58.00" y="80.50" width="335.00" height="0.60" fill="#2a2a2a" />
<rect x="58.00" y="154.00" width="335.00" height="0.60" fill="#2a2a2a" />
<rect x="58.00" y="157.50" width="335.00" height="0.60" fill="#2a2a2a" />
<rect x="58.00" y="161.00" width="335.00" height="0.60" fill="#2a2a2a" />
<rect x="58.00" y="164.50" width="335.00" height="0.60" fill="#2a2a2a" />
<rect x="58.00" y="168.00" width="335.00" height="0.60" fill="#2a2a2a" />
<rect x="58.00" y="241.50" width="335.00" height="0.60" fill="#2a2a2a" />
<rect x="58.00" y="245.00" width="335.00" height="0.60" fill="#2a2a2a" />
<rect x="58.00" y="248.50" width="335.00" height="0.60" fill="#2a2a2a" />
<rect x="58.00" y="252.00" width="335.00" height="0.60" fill="#2a2a2a" />
<rect x="58.00" y="255.50" width="335.00" height="0.60" fill="#2a2a2a" />
<rect x="58.00" y="329.00" width="335.00" height="0.60" fill="#2a2a2a" />
<rect x="58.00" y="332.50" width="335.00" height="0.60" fill="#2a2a2a" />
<rect x="58.00" y="336.00" width="335.00" height="0.60" fill="#2a2a2a" />
<rect x="58.00" y="339.50" width="335.00" height="0.60" fill="#2a2a2a" />
<rect x="58.00" y="343.00" width="335.00" height="0.60" fill="#2a2a2a" />
<rect x="107.30" y="53.00" width="0.60" height="233.00" fill="#2c2c2c" />
<rect x="111.30" y="53.00" width="0.60" height="233.00" fill="#2c2c2c" />
<rect x="115.30" y="53.00" width="0.60" height="233.00" fill="#2c2c2c" />
<rect x="119.30" y="53.00" width="0.60" height="233.00" fill="#2c2c2c" />
<rect x="122.80" y="53.00" width="0.60" height="233.00" fill="#2c2c2c" />
<rect x="194.90" y="53.00" width="0.60" height="233.00" fill="#2c2c2c" />
<rect x="198.90" y="53.00" width="0.60" height="233.00" fill="#2c2c2c" />
<rect x="202.90" y="53.00" width="0.60" height="233.00" fill="#2c2c2c" />
<rect x="206.90" y="53.00" width="0.60" height="233.00" fill="#2c2c2c" />
<rect x="210.40" y="53.00" width="0.60" height="233.00" fill="#2c2c2c" />
<rect x="282.50" y="53.00" width="0.60" height="233.00" fill="#2c2c2c" />
<rect x="286.50" y="53.00" width="0.60" height="233.00" fill="#2c2c2c" />
<rect x="290.50" y="53.00" width="0.60" height="233.00" fill="#2c2c2c" />
<rect x="294.50" y="53.00" width="0.60" height="233.00" fill="#2c2c2c" />
<rect x="298.00" y="53.00" width="0.60" height="233.00" fill="#2c2c2c" />
<rect x="370.10" y="53.00" width="0.60" height="233.00" fill="#2c2c2c" />
<rect x="374.10" y="53.00" width="0.60" height="233.00" fill="#2c2c2c" />
<rect x="378.10" y="53.00" width="0.60" height="233.00" fill="#2c2c2c" />
<rect x="382.10" y="53.00" width="0.60" height="233.00" fill="#2c2c2c" />
<rect x="385.60" y="53.00" width="0.60" height="233.00" fill="#2c2c2c" />
<rect x="457.70" y="53.00" width="0.60" height="233.00" fill="#2c2c2c" />
<rect x="461.70" y="53.00" width="0.60" height="233.00" fill="#2c2c2c" />
<rect x="465.70" y="53.00" width="0.60" height="233.00" fill="#2c2c2c" />
<rect x="469.70" y="53.00" width="0.60" height="233.00" fill="#2c2c2c" />
<rect x="473.20" y="53.00" width="0.60" height="233.00" fill="#2c2c2c" />
<rect x="38.30" y="-2.00" width="8.50" height="24.00" fill="#000" />
<rect x="38.30" y="44.00" width="8.50" height="18.00" fill="#000" />
<rect x="46.80" y="-2.00" width="57.50" height="67.00" fill="#000" />
<rect x="66.30" y="-0.80" width="38.00" height="11.30" fill="#353535" />
<rect x="66.80" y="10.50" width="37.00" height="51.00" fill="none" stroke="#484848" stroke-width="0.8" rx="0"/>
<rect x="69.30" y="14.00" width="10.00" height="45.00" fill="none" stroke="#6e6e6e" stroke-width="0.8" rx="0"/>
<rect x="80.30" y="15.00" width="18.50" height="3.20" fill="none" stroke="#5a5a5a" stroke-width="0.7" rx="0"/>
<rect x="80.30" y="20.40" width="18.50" height="3.20" fill="none" stroke="#5a5a5a" stroke-width="0.7" rx="0"/>
<rect x="80.30" y="25.80" width="18.50" height="3.20" fill="none" stroke="#5a5a5a" stroke-width="0.7" rx="0"/>
<rect x="80.30" y="31.20" width="18.50" height="3.20" fill="none" stroke="#5a5a5a" stroke-width="0.7" rx="0"/>
<rect x="80.30" y="36.60" width="18.50" height="3.20" fill="none" stroke="#5a5a5a" stroke-width="0.7" rx="0"/>
<rect x="80.30" y="42.00" width="18.50" height="3.20" fill="none" stroke="#5a5a5a" stroke-width="0.7" rx="0"/>
<rect x="80.30" y="47.40" width="18.50" height="3.20" fill="none" stroke="#5a5a5a" stroke-width="0.7" rx="0"/>
<rect x="80.30" y="52.80" width="18.50" height="3.20" fill="none" stroke="#5a5a5a" stroke-width="0.7" rx="0"/>
<polyline points="118.50,-2.00 118.50,41.00" fill="none" stroke="#000" stroke-width="1.5" stroke-linejoin="miter" />
<polyline points="106.80,63.00 111.30,47.00" fill="none" stroke="#141414" stroke-width="2.2" stroke-linejoin="miter" />
<polyline points="112.30,63.00 116.80,47.00" fill="none" stroke="#141414" stroke-width="2.2" stroke-linejoin="miter" />
<polyline points="118.30,63.00 121.30,52.00" fill="none" stroke="#1a1a1a" stroke-width="1.5" stroke-linejoin="miter" />
<polyline points="92.30,80.00 104.80,74.50" fill="none" stroke="#000" stroke-width="2.0" stroke-linejoin="miter" />
<polyline points="108.30,67.00 112.30,59.00" fill="none" stroke="#1a1a1a" stroke-width="1.0" stroke-linejoin="miter" />
<polyline points="112.30,67.00 116.30,59.00" fill="none" stroke="#1a1a1a" stroke-width="1.0" stroke-linejoin="miter" />
<rect x="125.90" y="-2.00" width="8.50" height="24.00" fill="#000" />
<rect x="125.90" y="44.00" width="8.50" height="18.00" fill="#000" />
<rect x="134.40" y="-2.00" width="57.50" height="67.00" fill="#000" />
<rect x="153.90" y="-0.80" width="38.00" height="11.30" fill="#353535" />
<rect x="154.40" y="10.50" width="37.00" height="51.00" fill="none" stroke="#484848" stroke-width="0.8" rx="0"/>
<rect x="156.90" y="14.00" width="10.00" height="45.00" fill="none" stroke="#6e6e6e" stroke-width="0.8" rx="0"/>
<rect x="167.90" y="15.00" width="18.50" height="3.20" fill="none" stroke="#5a5a5a" stroke-width="0.7" rx="0"/>
<rect x="167.90" y="20.40" width="18.50" height="3.20" fill="none" stroke="#5a5a5a" stroke-width="0.7" rx="0"/>
<rect x="167.90" y="25.80" width="18.50" height="3.20" fill="none" stroke="#5a5a5a" stroke-width="0.7" rx="0"/>
<rect x="167.90" y="31.20" width="18.50" height="3.20" fill="none" stroke="#5a5a5a" stroke-width="0.7" rx="0"/>
<rect x="167.90" y="36.60" width="18.50" height="3.20" fill="none" stroke="#5a5a5a" stroke-width="0.7" rx="0"/>
<rect x="167.90" y="42.00" width="18.50" height="3.20" fill="none" stroke="#5a5a5a" stroke-width="0.7" rx="0"/>
<rect x="167.90" y="47.40" width="18.50" height="3.20" fill="none" stroke="#5a5a5a" stroke-width="0.7" rx="0"/>
<rect x="167.90" y="52.80" width="18.50" height="3.20" fill="none" stroke="#5a5a5a" stroke-width="0.7" rx="0"/>
<polyline points="206.10,-2.00 206.10,41.00" fill="none" stroke="#000" stroke-width="1.5" stroke-linejoin="miter" />
<polyline points="194.40,63.00 198.90,47.00" fill="none" stroke="#141414" stroke-width="2.2" stroke-linejoin="miter" />
<polyline points="199.90,63.00 204.40,47.00" fill="none" stroke="#141414" stroke-width="2.2" stroke-linejoin="miter" />
<polyline points="205.90,63.00 208.90,52.00" fill="none" stroke="#1a1a1a" stroke-width="1.5" stroke-linejoin="miter" />
<polyline points="179.90,80.00 192.40,74.50" fill="none" stroke="#000" stroke-width="2.0" stroke-linejoin="miter" />
<polyline points="195.90,67.00 199.90,59.00" fill="none" stroke="#1a1a1a" stroke-width="1.0" stroke-linejoin="miter" />
<polyline points="199.90,67.00 203.90,59.00" fill="none" stroke="#1a1a1a" stroke-width="1.0" stroke-linejoin="miter" />
<rect x="213.50" y="-2.00" width="8.50" height="24.00" fill="#000" />
<rect x="213.50" y="44.00" width="8.50" height="18.00" fill="#000" />
<rect x="222.00" y="-2.00" width="57.50" height="67.00" fill="#000" />
<rect x="241.50" y="-0.80" width="38.00" height="11.30" fill="#353535" />
<rect x="242.00" y="10.50" width="37.00" height="51.00" fill="none" stroke="#484848" stroke-width="0.8" rx="0"/>
<rect x="244.50" y="14.00" width="10.00" height="45.00" fill="none" stroke="#6e6e6e" stroke-width="0.8" rx="0"/>
<rect x="255.50" y="15.00" width="18.50" height="3.20" fill="none" stroke="#5a5a5a" stroke-width="0.7" rx="0"/>
<rect x="255.50" y="20.40" width="18.50" height="3.20" fill="none" stroke="#5a5a5a" stroke-width="0.7" rx="0"/>
<rect x="255.50" y="25.80" width="18.50" height="3.20" fill="none" stroke="#5a5a5a" stroke-width="0.7" rx="0"/>
<rect x="255.50" y="31.20" width="18.50" height="3.20" fill="none" stroke="#5a5a5a" stroke-width="0.7" rx="0"/>
<rect x="255.50" y="36.60" width="18.50" height="3.20" fill="none" stroke="#5a5a5a" stroke-width="0.7" rx="0"/>
<rect x="255.50" y="42.00" width="18.50" height="3.20" fill="none" stroke="#5a5a5a" stroke-width="0.7" rx="0"/>
<rect x="255.50" y="47.40" width="18.50" height="3.20" fill="none" stroke="#5a5a5a" stroke-width="0.7" rx="0"/>
<rect x="255.50" y="52.80" width="18.50" height="3.20" fill="none" stroke="#5a5a5a" stroke-width="0.7" rx="0"/>
<polyline points="293.70,-2.00 293.70,41.00" fill="none" stroke="#000" stroke-width="1.5" stroke-linejoin="miter" />
<polyline points="282.00,63.00 286.50,47.00" fill="none" stroke="#141414" stroke-width="2.2" stroke-linejoin="miter" />
<polyline points="287.50,63.00 292.00,47.00" fill="none" stroke="#141414" stroke-width="2.2" stroke-linejoin="miter" />
<polyline points="293.50,63.00 296.50,52.00" fill="none" stroke="#1a1a1a" stroke-width="1.5" stroke-linejoin="miter" />
<polyline points="267.50,80.00 280.00,74.50" fill="none" stroke="#000" stroke-width="2.0" stroke-linejoin="miter" />
<polyline points="283.50,67.00 287.50,59.00" fill="none" stroke="#1a1a1a" stroke-width="1.0" stroke-linejoin="miter" />
<polyline points="287.50,67.00 291.50,59.00" fill="none" stroke="#1a1a1a" stroke-width="1.0" stroke-linejoin="miter" />
<rect x="301.10" y="-2.00" width="8.50" height="24.00" fill="#000" />
<rect x="301.10" y="44.00" width="8.50" height="18.00" fill="#000" />
<rect x="309.60" y="-2.00" width="57.50" height="67.00" fill="#000" />
<rect x="331.60" y="-2.00" width="50.50" height="10.50" fill="#353535" />
<rect x="310.60" y="-2.00" width="21.50" height="61.50" fill="none" stroke="#707070" stroke-width="0.8" rx="0"/>
<rect x="334.60" y="14.00" width="9.00" height="45.00" fill="none" stroke="#606060" stroke-width="0.8" rx="0"/>
<rect x="346.10" y="14.00" width="17.50" height="45.00" fill="none" stroke="#404040" stroke-width="0.8" rx="0"/>
<polyline points="381.30,-2.00 381.30,41.00" fill="none" stroke="#000" stroke-width="1.5" stroke-linejoin="miter" />
<polyline points="369.60,63.00 374.10,47.00" fill="none" stroke="#141414" stroke-width="2.2" stroke-linejoin="miter" />
<polyline points="375.10,63.00 379.60,47.00" fill="none" stroke="#141414" stroke-width="2.2" stroke-linejoin="miter" />
<polyline points="381.10,63.00 384.10,52.00" fill="none" stroke="#1a1a1a" stroke-width="1.5" stroke-linejoin="miter" />
<polyline points="355.10,80.00 367.60,74.50" fill="none" stroke="#000" stroke-width="2.0" stroke-linejoin="miter" />
<polyline points="371.10,67.00 375.10,59.00" fill="none" stroke="#1a1a1a" stroke-width="1.0" stroke-linejoin="miter" />
<polyline points="375.10,67.00 379.10,59.00" fill="none" stroke="#1a1a1a" stroke-width="1.0" stroke-linejoin="miter" />
<rect x="388.70" y="-2.00" width="8.50" height="24.00" fill="#000" />
<rect x="388.70" y="44.00" width="8.50" height="18.00" fill="#000" />
<rect x="397.20" y="-2.00" width="57.50" height="67.00" fill="#000" />
<rect x="416.70" y="-0.80" width="38.00" height="11.30" fill="#353535" />
<rect x="417.20" y="10.50" width="37.00" height="51.00" fill="none" stroke="#484848" stroke-width="0.8" rx="0"/>
<rect x="419.70" y="14.00" width="10.00" height="45.00" fill="none" stroke="#6e6e6e" stroke-width="0.8" rx="0"/>
<rect x="430.70" y="15.00" width="18.50" height="3.20" fill="none" stroke="#5a5a5a" stroke-width="0.7" rx="0"/>
<rect x="430.70" y="20.40" width="18.50" height="3.20" fill="none" stroke="#5a5a5a" stroke-width="0.7" rx="0"/>
<rect x="430.70" y="25.80" width="18.50" height="3.20" fill="none" stroke="#5a5a5a" stroke-width="0.7" rx="0"/>
<rect x="430.70" y="31.20" width="18.50" height="3.20" fill="none" stroke="#5a5a5a" stroke-width="0.7" rx="0"/>
<rect x="430.70" y="36.60" width="18.50" height="3.20" fill="none" stroke="#5a5a5a" stroke-width="0.7" rx="0"/>
<rect x="430.70" y="42.00" width="18.50" height="3.20" fill="none" stroke="#5a5a5a" stroke-width="0.7" rx="0"/>
<rect x="430.70" y="47.40" width="18.50" height="3.20" fill="none" stroke="#5a5a5a" stroke-width="0.7" rx="0"/>
<rect x="430.70" y="52.80" width="18.50" height="3.20" fill="none" stroke="#5a5a5a" stroke-width="0.7" rx="0"/>
<polyline points="468.90,-2.00 468.90,41.00" fill="none" stroke="#000" stroke-width="1.5" stroke-linejoin="miter" />
<polyline points="457.20,63.00 461.70,47.00" fill="none" stroke="#141414" stroke-width="2.2" stroke-linejoin="miter" />
<polyline points="462.70,63.00 467.20,47.00" fill="none" stroke="#141414" stroke-width="2.2" stroke-linejoin="miter" />
<polyline points="468.70,63.00 471.70,52.00" fill="none" stroke="#1a1a1a" stroke-width="1.5" stroke-linejoin="miter" />
<polyline points="442.70,80.00 455.20,74.50" fill="none" stroke="#000" stroke-width="2.0" stroke-linejoin="miter" />
<polyline points="458.70,67.00 462.70,59.00" fill="none" stroke="#1a1a1a" stroke-width="1.0" stroke-linejoin="miter" />
<polyline points="462.70,67.00 466.70,59.00" fill="none" stroke="#1a1a1a" stroke-width="1.0" stroke-linejoin="miter" />
<rect x="38.30" y="85.50" width="8.50" height="24.00" fill="#000" />
<rect x="38.30" y="131.50" width="8.50" height="18.00" fill="#000" />
<rect x="46.80" y="85.50" width="57.50" height="67.00" fill="#000" />
<rect x="66.30" y="86.70" width="38.00" height="11.30" fill="#353535" />
<rect x="66.80" y="98.00" width="37.00" height="51.00" fill="none" stroke="#484848" stroke-width="0.8" rx="0"/>
<rect x="69.30" y="101.50" width="10.00" height="45.00" fill="none" stroke="#6e6e6e" stroke-width="0.8" rx="0"/>
<rect x="80.30" y="102.50" width="18.50" height="3.20" fill="none" stroke="#5a5a5a" stroke-width="0.7" rx="0"/>
<rect x="80.30" y="107.90" width="18.50" height="3.20" fill="none" stroke="#5a5a5a" stroke-width="0.7" rx="0"/>
<rect x="80.30" y="113.30" width="18.50" height="3.20" fill="none" stroke="#5a5a5a" stroke-width="0.7" rx="0"/>
<rect x="80.30" y="118.70" width="18.50" height="3.20" fill="none" stroke="#5a5a5a" stroke-width="0.7" rx="0"/>
<rect x="80.30" y="124.10" width="18.50" height="3.20" fill="none" stroke="#5a5a5a" stroke-width="0.7" rx="0"/>
<rect x="80.30" y="129.50" width="18.50" height="3.20" fill="none" stroke="#5a5a5a" stroke-width="0.7" rx="0"/>
<rect x="80.30" y="134.90" width="18.50" height="3.20" fill="none" stroke="#5a5a5a" stroke-width="0.7" rx="0"/>
<rect x="80.30" y="140.30" width="18.50" height="3.20" fill="none" stroke="#5a5a5a" stroke-width="0.7" rx="0"/>
<polyline points="118.50,85.50 118.50,128.50" fill="none" stroke="#000" stroke-width="1.5" stroke-linejoin="miter" />
<polyline points="106.80,150.50 111.30,134.50" fill="none" stroke="#141414" stroke-width="2.2" stroke-linejoin="miter" />
<polyline points="112.30,150.50 116.80,134.50" fill="none" stroke="#141414" stroke-width="2.2" stroke-linejoin="miter" />
<polyline points="118.30,150.50 121.30,139.50" fill="none" stroke="#1a1a1a" stroke-width="1.5" stroke-linejoin="miter" />
<polyline points="92.30,167.50 104.80,162.00" fill="none" stroke="#000" stroke-width="2.0" stroke-linejoin="miter" />
<polyline points="108.30,154.50 112.30,146.50" fill="none" stroke="#1a1a1a" stroke-width="1.0" stroke-linejoin="miter" />
<polyline points="112.30,154.50 116.30,146.50" fill="none" stroke="#1a1a1a" stroke-width="1.0" stroke-linejoin="miter" />
<rect x="125.90" y="85.50" width="8.50" height="24.00" fill="#000" />
<rect x="125.90" y="131.50" width="8.50" height="18.00" fill="#000" />
<rect x="134.40" y="85.50" width="57.50" height="67.00" fill="#000" />
<rect x="153.90" y="86.70" width="38.00" height="11.30" fill="#353535" />
<rect x="154.40" y="98.00" width="37.00" height="51.00" fill="none" stroke="#484848" stroke-width="0.8" rx="0"/>
<rect x="156.90" y="101.50" width="10.00" height="45.00" fill="none" stroke="#6e6e6e" stroke-width="0.8" rx="0"/>
<rect x="167.90" y="102.50" width="18.50" height="3.20" fill="none" stroke="#5a5a5a" stroke-width="0.7" rx="0"/>
<rect x="167.90" y="107.90" width="18.50" height="3.20" fill="none" stroke="#5a5a5a" stroke-width="0.7" rx="0"/>
<rect x="167.90" y="113.30" width="18.50" height="3.20" fill="none" stroke="#5a5a5a" stroke-width="0.7" rx="0"/>
<rect x="167.90" y="118.70" width="18.50" height="3.20" fill="none" stroke="#5a5a5a" stroke-width="0.7" rx="0"/>
<rect x="167.90" y="124.10" width="18.50" height="3.20" fill="none" stroke="#5a5a5a" stroke-width="0.7" rx="0"/>
<rect x="167.90" y="129.50" width="18.50" height="3.20" fill="none" stroke="#5a5a5a" stroke-width="0.7" rx="0"/>
<rect x="167.90" y="134.90" width="18.50" height="3.20" fill="none" stroke="#5a5a5a" stroke-width="0.7" rx="0"/>
<rect x="167.90" y="140.30" width="18.50" height="3.20" fill="none" stroke="#5a5a5a" stroke-width="0.7" rx="0"/>
<polyline points="206.10,85.50 206.10,128.50" fill="none" stroke="#000" stroke-width="1.5" stroke-linejoin="miter" />
<polyline points="194.40,150.50 198.90,134.50" fill="none" stroke="#141414" stroke-width="2.2" stroke-linejoin="miter" />
<polyline points="199.90,150.50 204.40,134.50" fill="none" stroke="#141414" stroke-width="2.2" stroke-linejoin="miter" />
<polyline points="205.90,150.50 208.90,139.50" fill="none" stroke="#1a1a1a" stroke-width="1.5" stroke-linejoin="miter" />
<polyline points="179.90,167.50 192.40,162.00" fill="none" stroke="#000" stroke-width="2.0" stroke-linejoin="miter" />
<polyline points="195.90,154.50 199.90,146.50" fill="none" stroke="#1a1a1a" stroke-width="1.0" stroke-linejoin="miter" />
<polyline points="199.90,154.50 203.90,146.50" fill="none" stroke="#1a1a1a" stroke-width="1.0" stroke-linejoin="miter" />
<rect x="213.50" y="85.50" width="8.50" height="24.00" fill="#000" />
<rect x="213.50" y="131.50" width="8.50" height="18.00" fill="#000" />
<rect x="222.00" y="85.50" width="57.50" height="67.00" fill="#000" />
<rect x="241.50" y="86.70" width="38.00" height="11.30" fill="#353535" />
<rect x="242.00" y="98.00" width="37.00" height="51.00" fill="none" stroke="#484848" stroke-width="0.8" rx="0"/>
<rect x="244.50" y="101.50" width="10.00" height="45.00" fill="none" stroke="#6e6e6e" stroke-width="0.8" rx="0"/>
<rect x="255.50" y="102.50" width="18.50" height="3.20" fill="none" stroke="#5a5a5a" stroke-width="0.7" rx="0"/>
<rect x="255.50" y="107.90" width="18.50" height="3.20" fill="none" stroke="#5a5a5a" stroke-width="0.7" rx="0"/>
<rect x="255.50" y="113.30" width="18.50" height="3.20" fill="none" stroke="#5a5a5a" stroke-width="0.7" rx="0"/>
<rect x="255.50" y="118.70" width="18.50" height="3.20" fill="none" stroke="#5a5a5a" stroke-width="0.7" rx="0"/>
<rect x="255.50" y="124.10" width="18.50" height="3.20" fill="none" stroke="#5a5a5a" stroke-width="0.7" rx="0"/>
<rect x="255.50" y="129.50" width="18.50" height="3.20" fill="none" stroke="#5a5a5a" stroke-width="0.7" rx="0"/>
<rect x="255.50" y="134.90" width="18.50" height="3.20" fill="none" stroke="#5a5a5a" stroke-width="0.7" rx="0"/>
<rect x="255.50" y="140.30" width="18.50" height="3.20" fill="none" stroke="#5a5a5a" stroke-width="0.7" rx="0"/>
<polyline points="293.70,85.50 293.70,128.50" fill="none" stroke="#000" stroke-width="1.5" stroke-linejoin="miter" />
<polyline points="282.00,150.50 286.50,134.50" fill="none" stroke="#141414" stroke-width="2.2" stroke-linejoin="miter" />
<polyline points="287.50,150.50 292.00,134.50" fill="none" stroke="#141414" stroke-width="2.2" stroke-linejoin="miter" />
<polyline points="293.50,150.50 296.50,139.50" fill="none" stroke="#1a1a1a" stroke-width="1.5" stroke-linejoin="miter" />
<polyline points="267.50,167.50 280.00,162.00" fill="none" stroke="#000" stroke-width="2.0" stroke-linejoin="miter" />
<polyline points="283.50,154.50 287.50,146.50" fill="none" stroke="#1a1a1a" stroke-width="1.0" stroke-linejoin="miter" />
<polyline points="287.50,154.50 291.50,146.50" fill="none" stroke="#1a1a1a" stroke-width="1.0" stroke-linejoin="miter" />
<rect x="301.10" y="85.50" width="8.50" height="24.00" fill="#000" />
<rect x="301.10" y="131.50" width="8.50" height="18.00" fill="#000" />
<rect x="309.60" y="85.50" width="57.50" height="67.00" fill="#000" />
<rect x="331.60" y="85.50" width="50.50" height="10.50" fill="#353535" />
<rect x="310.60" y="85.50" width="21.50" height="61.50" fill="none" stroke="#707070" stroke-width="0.8" rx="0"/>
<rect x="334.60" y="101.50" width="9.00" height="45.00" fill="none" stroke="#606060" stroke-width="0.8" rx="0"/>
<rect x="346.10" y="101.50" width="17.50" height="45.00" fill="none" stroke="#404040" stroke-width="0.8" rx="0"/>
<polyline points="381.30,85.50 381.30,128.50" fill="none" stroke="#000" stroke-width="1.5" stroke-linejoin="miter" />
<polyline points="369.60,150.50 374.10,134.50" fill="none" stroke="#141414" stroke-width="2.2" stroke-linejoin="miter" />
<polyline points="375.10,150.50 379.60,134.50" fill="none" stroke="#141414" stroke-width="2.2" stroke-linejoin="miter" />
<polyline points="381.10,150.50 384.10,139.50" fill="none" stroke="#1a1a1a" stroke-width="1.5" stroke-linejoin="miter" />
<polyline points="355.10,167.50 367.60,162.00" fill="none" stroke="#000" stroke-width="2.0" stroke-linejoin="miter" />
<polyline points="371.10,154.50 375.10,146.50" fill="none" stroke="#1a1a1a" stroke-width="1.0" stroke-linejoin="miter" />
<polyline points="375.10,154.50 379.10,146.50" fill="none" stroke="#1a1a1a" stroke-width="1.0" stroke-linejoin="miter" />
<rect x="388.70" y="85.50" width="8.50" height="24.00" fill="#000" />
<rect x="388.70" y="131.50" width="8.50" height="18.00" fill="#000" />
<rect x="397.20" y="85.50" width="57.50" height="67.00" fill="#000" />
<rect x="416.70" y="86.70" width="38.00" height="11.30" fill="#353535" />
<rect x="417.20" y="98.00" width="37.00" height="51.00" fill="none" stroke="#484848" stroke-width="0.8" rx="0"/>
<rect x="419.70" y="101.50" width="10.00" height="45.00" fill="none" stroke="#6e6e6e" stroke-width="0.8" rx="0"/>
<rect x="430.70" y="102.50" width="18.50" height="3.20" fill="none" stroke="#5a5a5a" stroke-width="0.7" rx="0"/>
<rect x="430.70" y="107.90" width="18.50" height="3.20" fill="none" stroke="#5a5a5a" stroke-width="0.7" rx="0"/>
<rect x="430.70" y="113.30" width="18.50" height="3.20" fill="none" stroke="#5a5a5a" stroke-width="0.7" rx="0"/>
<rect x="430.70" y="118.70" width="18.50" height="3.20" fill="none" stroke="#5a5a5a" stroke-width="0.7" rx="0"/>
<rect x="430.70" y="124.10" width="18.50" height="3.20" fill="none" stroke="#5a5a5a" stroke-width="0.7" rx="0"/>
<rect x="430.70" y="129.50" width="18.50" height="3.20" fill="none" stroke="#5a5a5a" stroke-width="0.7" rx="0"/>
<rect x="430.70" y="134.90" width="18.50" height="3.20" fill="none" stroke="#5a5a5a" stroke-width="0.7" rx="0"/>
<rect x="430.70" y="140.30" width="18.50" height="3.20" fill="none" stroke="#5a5a5a" stroke-width="0.7" rx="0"/>
<polyline points="468.90,85.50 468.90,128.50" fill="none" stroke="#000" stroke-width="1.5" stroke-linejoin="miter" />
<polyline points="457.20,150.50 461.70,134.50" fill="none" stroke="#141414" stroke-width="2.2" stroke-linejoin="miter" />
<polyline points="462.70,150.50 467.20,134.50" fill="none" stroke="#141414" stroke-width="2.2" stroke-linejoin="miter" />
<polyline points="468.70,150.50 471.70,139.50" fill="none" stroke="#1a1a1a" stroke-width="1.5" stroke-linejoin="miter" />
<polyline points="442.70,167.50 455.20,162.00" fill="none" stroke="#000" stroke-width="2.0" stroke-linejoin="miter" />
<polyline points="458.70,154.50 462.70,146.50" fill="none" stroke="#1a1a1a" stroke-width="1.0" stroke-linejoin="miter" />
<polyline points="462.70,154.50 466.70,146.50" fill="none" stroke="#1a1a1a" stroke-width="1.0" stroke-linejoin="miter" />
<rect x="38.30" y="173.00" width="8.50" height="24.00" fill="#000" />
<rect x="38.30" y="219.00" width="8.50" height="18.00" fill="#000" />
<rect x="46.80" y="173.00" width="57.50" height="67.00" fill="#000" />
<rect x="66.30" y="174.20" width="38.00" height="11.30" fill="#353535" />
<rect x="66.80" y="185.50" width="37.00" height="51.00" fill="none" stroke="#484848" stroke-width="0.8" rx="0"/>
<rect x="69.30" y="189.00" width="10.00" height="45.00" fill="none" stroke="#6e6e6e" stroke-width="0.8" rx="0"/>
<rect x="80.30" y="190.00" width="18.50" height="3.20" fill="none" stroke="#5a5a5a" stroke-width="0.7" rx="0"/>
<rect x="80.30" y="195.40" width="18.50" height="3.20" fill="none" stroke="#5a5a5a" stroke-width="0.7" rx="0"/>
<rect x="80.30" y="200.80" width="18.50" height="3.20" fill="none" stroke="#5a5a5a" stroke-width="0.7" rx="0"/>
<rect x="80.30" y="206.20" width="18.50" height="3.20" fill="none" stroke="#5a5a5a" stroke-width="0.7" rx="0"/>
<rect x="80.30" y="211.60" width="18.50" height="3.20" fill="none" stroke="#5a5a5a" stroke-width="0.7" rx="0"/>
<rect x="80.30" y="217.00" width="18.50" height="3.20" fill="none" stroke="#5a5a5a" stroke-width="0.7" rx="0"/>
<rect x="80.30" y="222.40" width="18.50" height="3.20" fill="none" stroke="#5a5a5a" stroke-width="0.7" rx="0"/>
<rect x="80.30" y="227.80" width="18.50" height="3.20" fill="none" stroke="#5a5a5a" stroke-width="0.7" rx="0"/>
<polyline points="118.50,173.00 118.50,216.00" fill="none" stroke="#000" stroke-width="1.5" stroke-linejoin="miter" />
<polyline points="106.80,238.00 111.30,222.00" fill="none" stroke="#141414" stroke-width="2.2" stroke-linejoin="miter" />
<polyline points="112.30,238.00 116.80,222.00" fill="none" stroke="#141414" stroke-width="2.2" stroke-linejoin="miter" />
<polyline points="118.30,238.00 121.30,227.00" fill="none" stroke="#1a1a1a" stroke-width="1.5" stroke-linejoin="miter" />
<polyline points="92.30,255.00 104.80,249.50" fill="none" stroke="#000" stroke-width="2.0" stroke-linejoin="miter" />
<polyline points="108.30,242.00 112.30,234.00" fill="none" stroke="#1a1a1a" stroke-width="1.0" stroke-linejoin="miter" />
<polyline points="112.30,242.00 116.30,234.00" fill="none" stroke="#1a1a1a" stroke-width="1.0" stroke-linejoin="miter" />
<rect x="125.90" y="173.00" width="8.50" height="24.00" fill="#000" />
<rect x="125.90" y="219.00" width="8.50" height="18.00" fill="#000" />
<rect x="134.40" y="173.00" width="57.50" height="67.00" fill="#000" />
<rect x="153.90" y="174.20" width="38.00" height="11.30" fill="#353535" />
<rect x="154.40" y="185.50" width="37.00" height="51.00" fill="none" stroke="#484848" stroke-width="0.8" rx="0"/>
<rect x="156.90" y="189.00" width="10.00" height="45.00" fill="none" stroke="#6e6e6e" stroke-width="0.8" rx="0"/>
<rect x="167.90" y="190.00" width="18.50" height="3.20" fill="none" stroke="#5a5a5a" stroke-width="0.7" rx="0"/>
<rect x="167.90" y="195.40" width="18.50" height="3.20" fill="none" stroke="#5a5a5a" stroke-width="0.7" rx="0"/>
<rect x="167.90" y="200.80" width="18.50" height="3.20" fill="none" stroke="#5a5a5a" stroke-width="0.7" rx="0"/>
<rect x="167.90" y="206.20" width="18.50" height="3.20" fill="none" stroke="#5a5a5a" stroke-width="0.7" rx="0"/>
<rect x="167.90" y="211.60" width="18.50" height="3.20" fill="none" stroke="#5a5a5a" stroke-width="0.7" rx="0"/>
<rect x="167.90" y="217.00" width="18.50" height="3.20" fill="none" stroke="#5a5a5a" stroke-width="0.7" rx="0"/>
<rect x="167.90" y="222.40" width="18.50" height="3.20" fill="none" stroke="#5a5a5a" stroke-width="0.7" rx="0"/>
<rect x="167.90" y="227.80" width="18.50" height="3.20" fill="none" stroke="#5a5a5a" stroke-width="0.7" rx="0"/>
<polyline points="206.10,173.00 206.10,216.00" fill="none" stroke="#000" stroke-width="1.5" stroke-linejoin="miter" />
<polyline points="194.40,238.00 198.90,222.00" fill="none" stroke="#141414" stroke-width="2.2" stroke-linejoin="miter" />
<polyline points="199.90,238.00 204.40,222.00" fill="none" stroke="#141414" stroke-width="2.2" stroke-linejoin="miter" />
<polyline points="205.90,238.00 208.90,227.00" fill="none" stroke="#1a1a1a" stroke-width="1.5" stroke-linejoin="miter" />
<polyline points="179.90,255.00 192.40,249.50" fill="none" stroke="#000" stroke-width="2.0" stroke-linejoin="miter" />
<polyline points="195.90,242.00 199.90,234.00" fill="none" stroke="#1a1a1a" stroke-width="1.0" stroke-linejoin="miter" />
<polyline points="199.90,242.00 203.90,234.00" fill="none" stroke="#1a1a1a" stroke-width="1.0" stroke-linejoin="miter" />
<rect x="213.50" y="173.00" width="8.50" height="24.00" fill="#000" />
<rect x="213.50" y="219.00" width="8.50" height="18.00" fill="#000" />
<rect x="222.00" y="173.00" width="57.50" height="67.00" fill="#000" />
<rect x="241.50" y="174.20" width="38.00" height="11.30" fill="#353535" />
<rect x="242.00" y="185.50" width="37.00" height="51.00" fill="none" stroke="#484848" stroke-width="0.8" rx="0"/>
<rect x="244.50" y="189.00" width="10.00" height="45.00" fill="none" stroke="#6e6e6e" stroke-width="0.8" rx="0"/>
<rect x="255.50" y="190.00" width="18.50" height="3.20" fill="none" stroke="#5a5a5a" stroke-width="0.7" rx="0"/>
<rect x="255.50" y="195.40" width="18.50" height="3.20" fill="none" stroke="#5a5a5a" stroke-width="0.7" rx="0"/>
<rect x="255.50" y="200.80" width="18.50" height="3.20" fill="none" stroke="#5a5a5a" stroke-width="0.7" rx="0"/>
<rect x="255.50" y="206.20" width="18.50" height="3.20" fill="none" stroke="#5a5a5a" stroke-width="0.7" rx="0"/>
<rect x="255.50" y="211.60" width="18.50" height="3.20" fill="none" stroke="#5a5a5a" stroke-width="0.7" rx="0"/>
<rect x="255.50" y="217.00" width="18.50" height="3.20" fill="none" stroke="#5a5a5a" stroke-width="0.7" rx="0"/>
<rect x="255.50" y="222.40" width="18.50" height="3.20" fill="none" stroke="#5a5a5a" stroke-width="0.7" rx="0"/>
<rect x="255.50" y="227.80" width="18.50" height="3.20" fill="none" stroke="#5a5a5a" stroke-width="0.7" rx="0"/>
<polyline points="293.70,173.00 293.70,216.00" fill="none" stroke="#000" stroke-width="1.5" stroke-linejoin="miter" />
<polyline points="282.00,238.00 286.50,222.00" fill="none" stroke="#141414" stroke-width="2.2" stroke-linejoin="miter" />
<polyline points="287.50,238.00 292.00,222.00" fill="none" stroke="#141414" stroke-width="2.2" stroke-linejoin="miter" />
<polyline points="293.50,238.00 296.50,227.00" fill="none" stroke="#1a1a1a" stroke-width="1.5" stroke-linejoin="miter" />
<polyline points="267.50,255.00 280.00,249.50" fill="none" stroke="#000" stroke-width="2.0" stroke-linejoin="miter" />
<polyline points="283.50,242.00 287.50,234.00" fill="none" stroke="#1a1a1a" stroke-width="1.0" stroke-linejoin="miter" />
<polyline points="287.50,242.00 291.50,234.00" fill="none" stroke="#1a1a1a" stroke-width="1.0" stroke-linejoin="miter" />
<rect x="301.10" y="173.00" width="8.50" height="24.00" fill="#000" />
<rect x="301.10" y="219.00" width="8.50" height="18.00" fill="#000" />
<rect x="309.60" y="173.00" width="57.50" height="67.00" fill="#000" />
<rect x="331.60" y="173.00" width="50.50" height="10.50" fill="#353535" />
<rect x="310.60" y="173.00" width="21.50" height="61.50" fill="none" stroke="#707070" stroke-width="0.8" rx="0"/>
<rect x="334.60" y="189.00" width="9.00" height="45.00" fill="none" stroke="#606060" stroke-width="0.8" rx="0"/>
<rect x="346.10" y="189.00" width="17.50" height="45.00" fill="none" stroke="#404040" stroke-width="0.8" rx="0"/>
<polyline points="381.30,173.00 381.30,216.00" fill="none" stroke="#000" stroke-width="1.5" stroke-linejoin="miter" />
<polyline points="369.60,238.00 374.10,222.00" fill="none" stroke="#141414" stroke-width="2.2" stroke-linejoin="miter" />
<polyline points="375.10,238.00 379.60,222.00" fill="none" stroke="#141414" stroke-width="2.2" stroke-linejoin="miter" />
<polyline points="381.10,238.00 384.10,227.00" fill="none" stroke="#1a1a1a" stroke-width="1.5" stroke-linejoin="miter" />
<polyline points="355.10,255.00 367.60,249.50" fill="none" stroke="#000" stroke-width="2.0" stroke-linejoin="miter" />
<polyline points="371.10,242.00 375.10,234.00" fill="none" stroke="#1a1a1a" stroke-width="1.0" stroke-linejoin="miter" />
<polyline points="375.10,242.00 379.10,234.00" fill="none" stroke="#1a1a1a" stroke-width="1.0" stroke-linejoin="miter" />
<rect x="388.70" y="173.00" width="8.50" height="24.00" fill="#000" />
<rect x="388.70" y="219.00" width="8.50" height="18.00" fill="#000" />
<rect x="397.20" y="173.00" width="57.50" height="67.00" fill="#000" />
<rect x="416.70" y="174.20" width="38.00" height="11.30" fill="#353535" />
<rect x="417.20" y="185.50" width="37.00" height="51.00" fill="none" stroke="#484848" stroke-width="0.8" rx="0"/>
<rect x="419.70" y="189.00" width="10.00" height="45.00" fill="none" stroke="#6e6e6e" stroke-width="0.8" rx="0"/>
<rect x="430.70" y="190.00" width="18.50" height="3.20" fill="none" stroke="#5a5a5a" stroke-width="0.7" rx="0"/>
<rect x="430.70" y="195.40" width="18.50" height="3.20" fill="none" stroke="#5a5a5a" stroke-width="0.7" rx="0"/>
<rect x="430.70" y="200.80" width="18.50" height="3.20" fill="none" stroke="#5a5a5a" stroke-width="0.7" rx="0"/>
<rect x="430.70" y="206.20" width="18.50" height="3.20" fill="none" stroke="#5a5a5a" stroke-width="0.7" rx="0"/>
<rect x="430.70" y="211.60" width="18.50" height="3.20" fill="none" stroke="#5a5a5a" stroke-width="0.7" rx="0"/>
<rect x="430.70" y="217.00" width="18.50" height="3.20" fill="none" stroke="#5a5a5a" stroke-width="0.7" rx="0"/>
<rect x="430.70" y="222.40" width="18.50" height="3.20" fill="none" stroke="#5a5a5a" stroke-width="0.7" rx="0"/>
<rect x="430.70" y="227.80" width="18.50" height="3.20" fill="none" stroke="#5a5a5a" stroke-width="0.7" rx="0"/>
<polyline points="468.90,173.00 468.90,216.00" fill="none" stroke="#000" stroke-width="1.5" stroke-linejoin="miter" />
<polyline points="457.20,238.00 461.70,222.00" fill="none" stroke="#141414" stroke-width="2.2" stroke-linejoin="miter" />
<polyline points="462.70,238.00 467.20,222.00" fill="none" stroke="#141414" stroke-width="2.2" stroke-linejoin="miter" />
<polyline points="468.70,238.00 471.70,227.00" fill="none" stroke="#1a1a1a" stroke-width="1.5" stroke-linejoin="miter" />
<polyline points="442.70,255.00 455.20,249.50" fill="none" stroke="#000" stroke-width="2.0" stroke-linejoin="miter" />
<polyline points="458.70,242.00 462.70,234.00" fill="none" stroke="#1a1a1a" stroke-width="1.0" stroke-linejoin="miter" />
<polyline points="462.70,242.00 466.70,234.00" fill="none" stroke="#1a1a1a" stroke-width="1.0" stroke-linejoin="miter" />
<rect x="38.30" y="260.50" width="8.50" height="24.00" fill="#000" />
<rect x="38.30" y="306.50" width="8.50" height="18.00" fill="#000" />
<rect x="46.80" y="260.50" width="57.50" height="67.00" fill="#000" />
<rect x="66.30" y="261.70" width="38.00" height="11.30" fill="#353535" />
<rect x="66.80" y="273.00" width="37.00" height="51.00" fill="none" stroke="#484848" stroke-width="0.8" rx="0"/>
<rect x="69.30" y="276.50" width="10.00" height="45.00" fill="none" stroke="#6e6e6e" stroke-width="0.8" rx="0"/>
<rect x="80.30" y="277.50" width="18.50" height="3.20" fill="none" stroke="#5a5a5a" stroke-width="0.7" rx="0"/>
<rect x="80.30" y="282.90" width="18.50" height="3.20" fill="none" stroke="#5a5a5a" stroke-width="0.7" rx="0"/>
<rect x="80.30" y="288.30" width="18.50" height="3.20" fill="none" stroke="#5a5a5a" stroke-width="0.7" rx="0"/>
<rect x="80.30" y="293.70" width="18.50" height="3.20" fill="none" stroke="#5a5a5a" stroke-width="0.7" rx="0"/>
<rect x="80.30" y="299.10" width="18.50" height="3.20" fill="none" stroke="#5a5a5a" stroke-width="0.7" rx="0"/>
<rect x="80.30" y="304.50" width="18.50" height="3.20" fill="none" stroke="#5a5a5a" stroke-width="0.7" rx="0"/>
<rect x="80.30" y="309.90" width="18.50" height="3.20" fill="none" stroke="#5a5a5a" stroke-width="0.7" rx="0"/>
<rect x="80.30" y="315.30" width="18.50" height="3.20" fill="none" stroke="#5a5a5a" stroke-width="0.7" rx="0"/>
<polyline points="118.50,260.50 118.50,303.50" fill="none" stroke="#000" stroke-width="1.5" stroke-linejoin="miter" />
<polyline points="106.80,325.50 111.30,309.50" fill="none" stroke="#141414" stroke-width="2.2" stroke-linejoin="miter" />
<polyline points="112.30,325.50 116.80,309.50" fill="none" stroke="#141414" stroke-width="2.2" stroke-linejoin="miter" />
<polyline points="118.30,325.50 121.30,314.50" fill="none" stroke="#1a1a1a" stroke-width="1.5" stroke-linejoin="miter" />
<polyline points="92.30,342.50 104.80,337.00" fill="none" stroke="#000" stroke-width="2.0" stroke-linejoin="miter" />
<polyline points="108.30,329.50 112.30,321.50" fill="none" stroke="#1a1a1a" stroke-width="1.0" stroke-linejoin="miter" />
<polyline points="112.30,329.50 116.30,321.50" fill="none" stroke="#1a1a1a" stroke-width="1.0" stroke-linejoin="miter" />
<rect x="125.90" y="260.50" width="8.50" height="24.00" fill="#000" />
<rect x="125.90" y="306.50" width="8.50" height="18.00" fill="#000" />
<rect x="134.40" y="260.50" width="57.50" height="67.00" fill="#000" />
<rect x="153.90" y="261.70" width="38.00" height="11.30" fill="#353535" />
<rect x="154.40" y="273.00" width="37.00" height="51.00" fill="none" stroke="#484848" stroke-width="0.8" rx="0"/>
<rect x="156.90" y="276.50" width="10.00" height="45.00" fill="none" stroke="#6e6e6e" stroke-width="0.8" rx="0"/>
<rect x="167.90" y="277.50" width="18.50" height="3.20" fill="none" stroke="#5a5a5a" stroke-width="0.7" rx="0"/>
<rect x="167.90" y="282.90" width="18.50" height="3.20" fill="none" stroke="#5a5a5a" stroke-width="0.7" rx="0"/>
<rect x="167.90" y="288.30" width="18.50" height="3.20" fill="none" stroke="#5a5a5a" stroke-width="0.7" rx="0"/>
<rect x="167.90" y="293.70" width="18.50" height="3.20" fill="none" stroke="#5a5a5a" stroke-width="0.7" rx="0"/>
<rect x="167.90" y="299.10" width="18.50" height="3.20" fill="none" stroke="#5a5a5a" stroke-width="0.7" rx="0"/>
<rect x="167.90" y="304.50" width="18.50" height="3.20" fill="none" stroke="#5a5a5a" stroke-width="0.7" rx="0"/>
<rect x="167.90" y="309.90" width="18.50" height="3.20" fill="none" stroke="#5a5a5a" stroke-width="0.7" rx="0"/>
<rect x="167.90" y="315.30" width="18.50" height="3.20" fill="none" stroke="#5a5a5a" stroke-width="0.7" rx="0"/>
<polyline points="206.10,260.50 206.10,303.50" fill="none" stroke="#000" stroke-width="1.5" stroke-linejoin="miter" />
<polyline points="194.40,325.50 198.90,309.50" fill="none" stroke="#141414" stroke-width="2.2" stroke-linejoin="miter" />
<polyline points="199.90,325.50 204.40,309.50" fill="none" stroke="#141414" stroke-width="2.2" stroke-linejoin="miter" />
<polyline points="205.90,325.50 208.90,314.50" fill="none" stroke="#1a1a1a" stroke-width="1.5" stroke-linejoin="miter" />
<polyline points="179.90,342.50 192.40,337.00" fill="none" stroke="#000" stroke-width="2.0" stroke-linejoin="miter" />
<polyline points="195.90,329.50 199.90,321.50" fill="none" stroke="#1a1a1a" stroke-width="1.0" stroke-linejoin="miter" />
<polyline points="199.90,329.50 203.90,321.50" fill="none" stroke="#1a1a1a" stroke-width="1.0" stroke-linejoin="miter" />
<rect x="213.50" y="260.50" width="8.50" height="24.00" fill="#000" />
<rect x="213.50" y="306.50" width="8.50" height="18.00" fill="#000" />
<rect x="222.00" y="260.50" width="57.50" height="67.00" fill="#000" />
<rect x="241.50" y="261.70" width="38.00" height="11.30" fill="#353535" />
<rect x="242.00" y="273.00" width="37.00" height="51.00" fill="none" stroke="#484848" stroke-width="0.8" rx="0"/>
<rect x="244.50" y="276.50" width="10.00" height="45.00" fill="none" stroke="#6e6e6e" stroke-width="0.8" rx="0"/>
<rect x="255.50" y="277.50" width="18.50" height="3.20" fill="none" stroke="#5a5a5a" stroke-width="0.7" rx="0"/>
<rect x="255.50" y="282.90" width="18.50" height="3.20" fill="none" stroke="#5a5a5a" stroke-width="0.7" rx="0"/>
<rect x="255.50" y="288.30" width="18.50" height="3.20" fill="none" stroke="#5a5a5a" stroke-width="0.7" rx="0"/>
<rect x="255.50" y="293.70" width="18.50" height="3.20" fill="none" stroke="#5a5a5a" stroke-width="0.7" rx="0"/>
<rect x="255.50" y="299.10" width="18.50" height="3.20" fill="none" stroke="#5a5a5a" stroke-width="0.7" rx="0"/>
<rect x="255.50" y="304.50" width="18.50" height="3.20" fill="none" stroke="#5a5a5a" stroke-width="0.7" rx="0"/>
<rect x="255.50" y="309.90" width="18.50" height="3.20" fill="none" stroke="#5a5a5a" stroke-width="0.7" rx="0"/>
<rect x="255.50" y="315.30" width="18.50" height="3.20" fill="none" stroke="#5a5a5a" stroke-width="0.7" rx="0"/>
<polyline points="293.70,260.50 293.70,303.50" fill="none" stroke="#000" stroke-width="1.5" stroke-linejoin="miter" />
<polyline points="282.00,325.50 286.50,309.50" fill="none" stroke="#141414" stroke-width="2.2" stroke-linejoin="miter" />
<polyline points="287.50,325.50 292.00,309.50" fill="none" stroke="#141414" stroke-width="2.2" stroke-linejoin="miter" />
<polyline points="293.50,325.50 296.50,314.50" fill="none" stroke="#1a1a1a" stroke-width="1.5" stroke-linejoin="miter" />
<polyline points="267.50,342.50 280.00,337.00" fill="none" stroke="#000" stroke-width="2.0" stroke-linejoin="miter" />
<polyline points="283.50,329.50 287.50,321.50" fill="none" stroke="#1a1a1a" stroke-width="1.0" stroke-linejoin="miter" />
<polyline points="287.50,329.50 291.50,321.50" fill="none" stroke="#1a1a1a" stroke-width="1.0" stroke-linejoin="miter" />
<rect x="301.10" y="260.50" width="8.50" height="24.00" fill="#000" />
<rect x="301.10" y="306.50" width="8.50" height="18.00" fill="#000" />
<rect x="309.60" y="260.50" width="57.50" height="67.00" fill="#000" />
<rect x="331.60" y="260.50" width="50.50" height="10.50" fill="#353535" />
<rect x="310.60" y="260.50" width="21.50" height="61.50" fill="none" stroke="#707070" stroke-width="0.8" rx="0"/>
<rect x="334.60" y="276.50" width="9.00" height="45.00" fill="none" stroke="#606060" stroke-width="0.8" rx="0"/>
<rect x="346.10" y="276.50" width="17.50" height="45.00" fill="none" stroke="#404040" stroke-width="0.8" rx="0"/>
<polyline points="381.30,260.50 381.30,303.50" fill="none" stroke="#000" stroke-width="1.5" stroke-linejoin="miter" />
<polyline points="369.60,325.50 374.10,309.50" fill="none" stroke="#141414" stroke-width="2.2" stroke-linejoin="miter" />
<polyline points="375.10,325.50 379.60,309.50" fill="none" stroke="#141414" stroke-width="2.2" stroke-linejoin="miter" />
<polyline points="381.10,325.50 384.10,314.50" fill="none" stroke="#1a1a1a" stroke-width="1.5" stroke-linejoin="miter" />
<polyline points="355.10,342.50 367.60,337.00" fill="none" stroke="#000" stroke-width="2.0" stroke-linejoin="miter" />
<polyline points="371.10,329.50 375.10,321.50" fill="none" stroke="#1a1a1a" stroke-width="1.0" stroke-linejoin="miter" />
<polyline points="375.10,329.50 379.10,321.50" fill="none" stroke="#1a1a1a" stroke-width="1.0" stroke-linejoin="miter" />
<rect x="388.70" y="260.50" width="8.50" height="24.00" fill="#000" />
<rect x="388.70" y="306.50" width="8.50" height="18.00" fill="#000" />
<rect x="397.20" y="260.50" width="57.50" height="67.00" fill="#000" />
<rect x="416.70" y="261.70" width="38.00" height="11.30" fill="#353535" />
<rect x="417.20" y="273.00" width="37.00" height="51.00" fill="none" stroke="#484848" stroke-width="0.8" rx="0"/>
<rect x="419.70" y="276.50" width="10.00" height="45.00" fill="none" stroke="#6e6e6e" stroke-width="0.8" rx="0"/>
<rect x="430.70" y="277.50" width="18.50" height="3.20" fill="none" stroke="#5a5a5a" stroke-width="0.7" rx="0"/>
<rect x="430.70" y="282.90" width="18.50" height="3.20" fill="none" stroke="#5a5a5a" stroke-width="0.7" rx="0"/>
<rect x="430.70" y="288.30" width="18.50" height="3.20" fill="none" stroke="#5a5a5a" stroke-width="0.7" rx="0"/>
<rect x="430.70" y="293.70" width="18.50" height="3.20" fill="none" stroke="#5a5a5a" stroke-width="0.7" rx="0"/>
<rect x="430.70" y="299.10" width="18.50" height="3.20" fill="none" stroke="#5a5a5a" stroke-width="0.7" rx="0"/>
<rect x="430.70" y="304.50" width="18.50" height="3.20" fill="none" stroke="#5a5a5a" stroke-width="0.7" rx="0"/>
<rect x="430.70" y="309.90" width="18.50" height="3.20" fill="none" stroke="#5a5a5a" stroke-width="0.7" rx="0"/>
<rect x="430.70" y="315.30" width="18.50" height="3.20" fill="none" stroke="#5a5a5a" stroke-width="0.7" rx="0"/>
<polyline points="468.90,260.50 468.90,303.50" fill="none" stroke="#000" stroke-width="1.5" stroke-linejoin="miter" />
<polyline points="457.20,325.50 461.70,309.50" fill="none" stroke="#141414" stroke-width="2.2" stroke-linejoin="miter" />
<polyline points="462.70,325.50 467.20,309.50" fill="none" stroke="#141414" stroke-width="2.2" stroke-linejoin="miter" />
<polyline points="468.70,325.50 471.70,314.50" fill="none" stroke="#1a1a1a" stroke-width="1.5" stroke-linejoin="miter" />
<polyline points="442.70,342.50 455.20,337.00" fill="none" stroke="#000" stroke-width="2.0" stroke-linejoin="miter" />
<polyline points="458.70,329.50 462.70,321.50" fill="none" stroke="#1a1a1a" stroke-width="1.0" stroke-linejoin="miter" />
<polyline points="462.70,329.50 466.70,321.50" fill="none" stroke="#1a1a1a" stroke-width="1.0" stroke-linejoin="miter" />
<polyline points="58.00,75.50 94.00,75.50 102.70,73.00 180.00,73.00 189.00,70.80 271.00,70.80 279.00,67.50 360.00,67.50 368.00,64.50 393.00,64.50" fill="none" stroke="#b8643c" stroke-width="1.5" stroke-linejoin="miter" />
<polyline points="102.70,75.80 179.00,75.50 189.00,73.00 270.00,73.00 278.00,70.50 360.00,70.50 368.00,68.00 393.00,68.00" fill="none" stroke="#b4b4b4" stroke-width="1.0" stroke-linejoin="miter" />
<polyline points="176.00,77.50 190.00,75.50" fill="none" stroke="#000" stroke-width="2.2" stroke-linejoin="miter" />
<polyline points="368.00,77.40 393.00,77.40" fill="none" stroke="#c8683e" stroke-width="1.0" stroke-linejoin="miter" />
<polyline points="58.00,84.00 190.00,84.00 192.00,83.30 368.00,83.30 370.00,84.00 393.00,84.00" fill="none" stroke="#d4d4d4" stroke-width="1.1" stroke-linejoin="miter" />
<polyline points="143.40,75.60 143.40,84.00" fill="none" stroke="#b4b4b4" stroke-width="1.0" stroke-linejoin="miter" />
<polyline points="234.30,73.00 234.30,84.00" fill="none" stroke="#b4b4b4" stroke-width="1.0" stroke-linejoin="miter" />
<polyline points="236.30,73.00 236.30,84.00" fill="none" stroke="#c8683e" stroke-width="0.8" stroke-linejoin="miter" />
<polyline points="324.60,70.50 324.60,85.50" fill="none" stroke="#b4b4b4" stroke-width="1.0" stroke-linejoin="miter" />
<polyline points="326.80,70.50 326.80,85.50" fill="none" stroke="#c8683e" stroke-width="0.8" stroke-linejoin="miter" />
<polyline points="290.50,53.00 286.60,65.00 286.60,140.00 284.00,150.00 284.00,252.00 281.50,262.00 280.50,286.00" fill="none" stroke="#78b878" stroke-width="1.1" stroke-linejoin="miter" />
<polyline points="286.70,116.50 310.00,116.50" fill="none" stroke="#78b878" stroke-width="1.0" stroke-linejoin="miter" />
<polyline points="242.60,89.30 286.70,89.30" fill="none" stroke="#78b878" stroke-width="1.0" stroke-linejoin="miter" />
<polyline points="382.00,64.50 382.00,143.00 379.40,151.00 379.40,228.00 377.00,240.00 377.00,287.00" fill="none" stroke="#b0683e" stroke-width="1.0" stroke-linejoin="miter" />
<polyline points="331.60,96.60 382.00,96.60" fill="none" stroke="#b0683e" stroke-width="1.0" stroke-linejoin="miter" />
<polyline points="382.00,124.00 393.00,124.00" fill="none" stroke="#b0683e" stroke-width="1.0" stroke-linejoin="miter" />
<polyline points="331.60,182.00 379.40,182.00" fill="none" stroke="#b0683e" stroke-width="1.0" stroke-linejoin="miter" />
<polyline points="379.40,209.60 393.00,209.60" fill="none" stroke="#b0683e" stroke-width="1.0" stroke-linejoin="miter" />
<polyline points="331.60,267.40 377.00,267.40" fill="none" stroke="#b0683e" stroke-width="1.0" stroke-linejoin="miter" />
<polyline points="242.50,175.00 284.20,175.00" fill="none" stroke="#78b878" stroke-width="1.0" stroke-linejoin="miter" />
<polyline points="242.50,175.00 240.00,180.00" fill="none" stroke="#78b878" stroke-width="1.0" stroke-linejoin="miter" />
<polyline points="284.20,202.50 310.00,202.50" fill="none" stroke="#78b878" stroke-width="1.0" stroke-linejoin="miter" />
<polyline points="284.20,252.00 358.00,252.00 367.00,248.60 393.00,248.60" fill="none" stroke="#78b878" stroke-width="1.0" stroke-linejoin="miter" />
<polyline points="318.80,252.00 318.80,263.40 308.00,286.00" fill="none" stroke="#78b878" stroke-width="1.0" stroke-linejoin="miter" />
<polyline points="170.30,144.00 170.30,276.00" fill="none" stroke="#e6e6e6" stroke-width="0.9" stroke-linejoin="miter" />
<polyline points="143.60,84.00 154.50,98.70" fill="none" stroke="#c8683e" stroke-width="1.3" stroke-linejoin="miter" />
<polyline points="154.50,98.70 189.00,98.70 189.00,127.50" fill="none" stroke="#e0a08c" stroke-width="1.6" stroke-linejoin="miter" />
<polyline points="189.00,127.50 189.00,145.00" fill="none" stroke="#d8a8a8" stroke-width="1.0" stroke-linejoin="miter" />
<polyline points="154.50,98.70 146.20,116.20 156.00,135.70 161.20,127.50 169.50,126.00" fill="none" stroke="#d07448" stroke-width="1.2" stroke-linejoin="miter" />
<polyline points="151.50,108.70 156.00,114.00 168.70,116.20" fill="none" stroke="#b8c8d8" stroke-width="0.9" stroke-linejoin="miter" />
<polyline points="149.20,115.50 156.00,122.20 159.00,129.70 168.00,142.50" fill="none" stroke="#b8c8d8" stroke-width="0.9" stroke-linejoin="miter" />
<rect x="168.70" y="105.00" width="18.00" height="3.70" fill="none" stroke="#5a4a4a" stroke-width="0.9" rx="0.6"/>
<rect x="168.70" y="114.00" width="18.00" height="4.50" fill="none" stroke="#d8d8d8" stroke-width="0.9" rx="0.6"/>
<rect x="168.70" y="125.00" width="18.00" height="4.70" fill="none" stroke="#d8d8d8" stroke-width="0.9" rx="0.6"/>
<rect x="168.70" y="135.70" width="18.00" height="4.50" fill="none" stroke="#d8d8d8" stroke-width="0.9" rx="0.6"/>
<rect x="168.70" y="141.70" width="18.00" height="3.80" fill="none" stroke="#d8d8d8" stroke-width="0.9" rx="0.6"/>
<rect x="186.00" y="138.00" width="3.00" height="4.50" fill="none" stroke="#d8d8d8" stroke-width="0.7" rx="0"/>
<polyline points="128.00,142.50 169.50,147.70 188.00,147.20" fill="none" stroke="#9a6aa8" stroke-width="1.0" stroke-linejoin="miter" />
<rect x="128.00" y="141.50" width="3.50" height="2.20" fill="#a080b8" />
<polyline points="128.00,231.00 153.00,234.30 189.00,233.50" fill="none" stroke="#9a6aa8" stroke-width="1.0" stroke-linejoin="miter" />
<rect x="128.00" y="230.00" width="3.50" height="2.20" fill="#a080b8" />
<polyline points="216.00,231.00 256.00,235.00 274.00,234.00" fill="none" stroke="#9a6aa8" stroke-width="1.0" stroke-linejoin="miter" />
<rect x="216.00" y="230.00" width="3.50" height="2.20" fill="#a080b8" />
<rect x="127.50" y="90.00" width="5.00" height="5.50" fill="#5fd8a8" />
<rect x="127.50" y="99.00" width="5.00" height="1.60" fill="#d0d0d0" />
<polyline points="223.40,84.00 242.60,99.80 276.00,99.80 276.00,118.00" fill="none" stroke="#e6e6e6" stroke-width="1.1" stroke-linejoin="miter" />
<polyline points="242.60,99.80 238.30,110.30 244.40,118.20 248.80,110.30 256.70,105.00" fill="none" stroke="#e6e6e6" stroke-width="1.0" stroke-linejoin="miter" />
<polyline points="222.00,87.00 243.50,126.90 256.70,110.30" fill="none" stroke="#d8d8d8" stroke-width="1.0" stroke-linejoin="miter" />
<polyline points="221.60,89.30 243.50,119.00 247.00,118.00" fill="none" stroke="#4a68c0" stroke-width="1.0" stroke-linejoin="miter" />
<polyline points="221.60,94.50 244.40,136.50 256.70,112.90" fill="none" stroke="#c8b04a" stroke-width="1.1" stroke-linejoin="miter" />
<rect x="257.50" y="102.40" width="17.00" height="3.50" fill="none" stroke="#dedede" stroke-width="1.0" rx="0.6"/>
<rect x="257.50" y="107.60" width="17.00" height="3.50" fill="none" stroke="#dedede" stroke-width="1.0" rx="0.6"/>
<rect x="257.50" y="113.80" width="17.00" height="4.40" fill="none" stroke="#dedede" stroke-width="1.0" rx="0.6"/>
<polyline points="217.30,142.70 241.80,147.00 272.40,147.00" fill="none" stroke="#9a6aa8" stroke-width="1.0" stroke-linejoin="miter" />
<rect x="216.40" y="87.50" width="5.00" height="2.60" fill="#5fd8b4" />
<rect x="216.40" y="92.80" width="5.00" height="1.70" fill="#c8b04a" />
<rect x="216.40" y="95.40" width="5.00" height="1.70" fill="#d8c8a0" />
<polyline points="154.50,187.20 188.70,187.20 189.50,232.00" fill="none" stroke="#66e4bc" stroke-width="1.7" stroke-linejoin="miter" />
<polyline points="154.50,187.20 145.60,206.00 155.30,223.80" fill="none" stroke="#66e4bc" stroke-width="1.6" stroke-linejoin="miter" />
<polyline points="145.60,206.00 155.30,208.30" fill="none" stroke="#4a68c0" stroke-width="0.8" stroke-linejoin="miter" />
<polyline points="155.30,208.30 167.50,193.70" fill="none" stroke="#4a68c0" stroke-width="0.8" stroke-linejoin="miter" />
<polyline points="155.30,208.30 167.50,199.00" fill="none" stroke="#4a68c0" stroke-width="0.8" stroke-linejoin="miter" />
<polyline points="155.30,208.30 167.50,220.00" fill="none" stroke="#4a68c0" stroke-width="0.8" stroke-linejoin="miter" />
<polyline points="155.30,223.80 167.50,215.00" fill="none" stroke="#4a68c0" stroke-width="0.8" stroke-linejoin="miter" />
<polyline points="155.30,223.80 167.50,226.00" fill="none" stroke="#4a68c0" stroke-width="0.8" stroke-linejoin="miter" />
<polyline points="155.30,223.80 167.50,231.00" fill="none" stroke="#4a68c0" stroke-width="0.8" stroke-linejoin="miter" />
<polyline points="150.00,197.00 167.50,204.00" fill="none" stroke="#4a68c0" stroke-width="0.8" stroke-linejoin="miter" />
<rect x="170.00" y="191.30" width="15.50" height="3.40" fill="#8a8a8a" stroke="#e0e0e0" stroke-width="0.8" rx="1.2"/>
<circle cx="167.8" cy="193.00" r="1.1" fill="none" stroke="#c8d0a8" stroke-width="0.6"/>
<rect x="170.00" y="196.70" width="15.50" height="3.40" fill="#8a8a8a" stroke="#e0e0e0" stroke-width="0.8" rx="1.2"/>
<circle cx="167.8" cy="198.40" r="1.1" fill="none" stroke="#c8d0a8" stroke-width="0.6"/>
<rect x="170.00" y="202.10" width="15.50" height="3.40" fill="#8a8a8a" stroke="#e0e0e0" stroke-width="0.8" rx="1.2"/>
<circle cx="167.8" cy="203.80" r="1.1" fill="none" stroke="#c8d0a8" stroke-width="0.6"/>
<rect x="170.00" y="207.50" width="15.50" height="3.40" fill="#8a8a8a" stroke="#e0e0e0" stroke-width="0.8" rx="1.2"/>
<circle cx="167.8" cy="209.20" r="1.1" fill="none" stroke="#c8d0a8" stroke-width="0.6"/>
<rect x="170.00" y="212.90" width="15.50" height="3.40" fill="#8a8a8a" stroke="#e0e0e0" stroke-width="0.8" rx="1.2"/>
<circle cx="167.8" cy="214.60" r="1.1" fill="none" stroke="#c8d0a8" stroke-width="0.6"/>
<rect x="170.00" y="218.30" width="15.50" height="3.40" fill="#8a8a8a" stroke="#e0e0e0" stroke-width="0.8" rx="1.2"/>
<circle cx="167.8" cy="220.00" r="1.1" fill="none" stroke="#c8d0a8" stroke-width="0.6"/>
<rect x="170.00" y="223.70" width="15.50" height="3.40" fill="#8a8a8a" stroke="#e0e0e0" stroke-width="0.8" rx="1.2"/>
<circle cx="167.8" cy="225.40" r="1.1" fill="none" stroke="#c8d0a8" stroke-width="0.6"/>
<rect x="170.00" y="229.10" width="15.50" height="3.40" fill="#8a8a8a" stroke="#e0e0e0" stroke-width="0.8" rx="1.2"/>
<circle cx="167.8" cy="230.80" r="1.1" fill="none" stroke="#c8d0a8" stroke-width="0.6"/>
<rect x="127.50" y="175.60" width="5.50" height="2.90" fill="#485068" />
<rect x="127.50" y="180.40" width="5.50" height="2.80" fill="#e0e0e0" />
<rect x="127.50" y="185.00" width="5.50" height="4.00" fill="#788a68" />
<rect x="127.50" y="192.70" width="5.50" height="3.80" fill="#d8d0c8" />
<polyline points="242.30,187.50 278.00,187.50 278.00,232.00" fill="none" stroke="#c8b04a" stroke-width="1.1" stroke-linejoin="miter" />
<polyline points="242.30,187.50 237.70,197.90 244.60,208.20 256.00,193.30" fill="none" stroke="#c8b04a" stroke-width="1.0" stroke-linejoin="miter" />
<polyline points="219.30,185.20 256.00,233.50" fill="none" stroke="#4a68c0" stroke-width="1.0" stroke-linejoin="miter" />
<polyline points="219.30,185.20 243.50,223.20 256.00,210.50" fill="none" stroke="#70c090" stroke-width="1.0" stroke-linejoin="miter" />
<rect x="256.00" y="191.00" width="18.50" height="3.40" fill="none" stroke="#e0e0e0" stroke-width="1.0" rx="0.6"/>
<rect x="256.00" y="207.00" width="18.50" height="4.70" fill="none" stroke="#e0e0e0" stroke-width="1.0" rx="0.6"/>
<rect x="256.00" y="229.00" width="18.50" height="4.50" fill="none" stroke="#e0e0e0" stroke-width="1.0" rx="0.6"/>
<rect x="215.50" y="176.00" width="5.50" height="2.50" fill="#e0c8c8" />
<rect x="215.50" y="184.00" width="5.50" height="2.60" fill="#5fd8b4" />
<rect x="215.50" y="190.00" width="5.50" height="2.20" fill="#d8a8a8" />
<rect x="215.50" y="195.30" width="5.50" height="1.50" fill="#e0e0e0" />
<polyline points="150.00,287.00 155.00,276.00 188.30,276.00 188.30,287.00" fill="none" stroke="#f0f0f0" stroke-width="1.7" stroke-linejoin="miter" />
<rect x="162.00" y="279.00" width="8.00" height="8.00" fill="none" stroke="#909090" stroke-width="0.8" rx="0"/>
<rect x="172.00" y="279.00" width="15.00" height="7.00" fill="#a0a0a0" />
<rect x="127.50" y="264.00" width="5.50" height="3.00" fill="#909090" />
<rect x="127.50" y="270.00" width="5.50" height="2.00" fill="#e0e0e0" />
<rect x="127.50" y="275.50" width="5.50" height="2.00" fill="#405848" />
<rect x="127.50" y="279.00" width="5.50" height="2.00" fill="#806a50" />
<rect x="127.50" y="282.70" width="5.50" height="2.80" fill="#90d0a8" />
<rect x="215.00" y="270.00" width="4.00" height="2.00" fill="#e0e0e0" />
<rect x="215.00" y="279.00" width="4.00" height="3.00" fill="#90d0a8" />
<rect x="302.50" y="88.00" width="4.00" height="2.00" fill="#d0d0c0" />
<rect x="302.50" y="97.00" width="4.00" height="1.20" fill="#e0e0e0" />
<rect x="302.50" y="142.00" width="4.00" height="2.00" fill="#b090c0" />
<rect x="302.50" y="184.00" width="4.00" height="2.00" fill="#d0d0c0" />
<rect x="302.50" y="190.00" width="4.00" height="1.50" fill="#e0e0e0" />
<rect x="302.50" y="229.00" width="4.00" height="2.00" fill="#b090c0" />
<rect x="128.50" y="53.40" width="5.00" height="2.50" fill="#a080b8" />
<path d="M380.5,193 L380.5,201.5 L382.3,199.8 L383.6,202.6 L384.6,202.1 L383.4,199.4 L385.8,199.2 Z" fill="#fff" stroke="#222" stroke-width="0.5"/>
</svg>
  </div>
  <!-- console tab -->
  <div class="tab" style="left:5.5px;top:290px;width:34px;height:15px"></div><div class="a" style="left:8.7px;top:295px;font-size:7px;line-height:7px;color:#505050">Console</div>
  <div class="a" style="left:5.5px;top:304.5px;width:337.5px;height:78.3px;border:1px solid #d3d1ce;border-radius:0 2px 2px 2px;background:#f2f1f0"></div>
  <div class="a" style="left:10.5px;top:307.5px;width:326.5px;height:53px;background:#fff;border:1px solid #d8d6d3;overflow:hidden"></div>
  <div class="a mono" style="left:13px;top:311.3px;width:316px;height:48.7px;overflow:hidden;font-size:8px;letter-spacing:-0.41px;line-height:8.45px;color:#262626">
    <div style="margin-top:-2.8px">Info: visited 73810 PIPs (0.01% revisits, 0.02% overtime revisits).</div>
    <div>Info: final tns with respect to arc budgets: 0.000000 ns (0 nets, 0</div>
    <div>arcs)</div>
    <div>Info: Checksum: 0xa4786aa9</div>
    <div>Routing design successful.</div>
  </div>
  <div class="a" style="left:330px;top:309px;width:7px;height:50px;background:#e6e5e3;border:1px solid #d6d4d1;border-radius:3px"></div>
  <div class="a" style="left:330.5px;top:337.8px;width:6px;height:15.4px;background:#fafafa;border:1px solid #c4c2bf;border-radius:3px"></div>
  <div class="a" style="left:331.8px;top:312px;width:0;height:0;border-left:1.6px solid transparent;border-right:1.6px solid transparent;border-bottom:2px solid #777"></div>
  <div class="a" style="left:331.8px;top:355px;width:0;height:0;border-left:1.6px solid transparent;border-right:1.6px solid transparent;border-top:2px solid #777"></div>
  <div class="a" style="left:10.5px;top:362.7px;width:326.5px;height:14.5px;background:#fff;border:1px solid #cac8c5;border-radius:2px"></div>
  <div class="a mono" style="left:13px;top:366.3px;font-size:7px;line-height:7px;letter-spacing:-0.2px;color:#a0a0a0">&gt;&gt;&gt;</div>
  <!-- right panel -->
  <div class="a" style="left:346px;top:39px;width:144px;height:11.5px;background:#fff;border:1px solid #d6d4d1;border-radius:2px"></div>
  <div class="a" style="left:360.3px;top:41px;font-size:7px;line-height:7px;color:#a4a4a4">Search...</div>
  <svg class="a" style="left:346px;top:38px" width="20" height="14" viewBox="398 38 20 14"><circle cx="403.5" cy="43.8" r="2.2" fill="none" stroke="#b8aa9c" stroke-width="0.9"/><path d="M405.1,45.4 L407.3,47.6" stroke="#9a8a7a" stroke-width="1.3"/></svg>
<div class="a" style="left:345px;top:53px;width:146px;height:153px;background:#fff;border:1px solid #d2d0cd;overflow:hidden">
<div class="a" style="left:0;top:0;width:145px;height:13px;background:linear-gradient(#fafafa,#ecebea);border-bottom:1px solid #dad8d5;font-size:7.5px;color:#5c5c5c;padding:2px 0 0 2px">Items</div>
<div class="a" style="left:0;top:141.5px;width:139px;height:10px;background:linear-gradient(#e4e3e1,#d4d3d1)"></div>
<div class="a tr" style="left:40.8px;top:13.40px">X9.Y11.sp12_h_r_1.->.X9.Y...</div>
<div class="a tr" style="left:29.3px;top:22.58px">Y13</div>
<div class="a arr" style="left:22.5px;top:25.68px"></div>
<div class="a tr" style="left:11.0px;top:31.76px">Nets</div>
<div class="a arr" style="left:3.0px;top:34.86px"></div>
<div class="a tr" style="left:20.8px;top:40.94px">clki</div>
<div class="a tr" style="left:20.8px;top:50.12px">$auto$alumacc.cc:474:replace_al...</div>
<div class="a tr" style="left:20.8px;top:59.30px">counter[8]</div>
<div class="a tr" style="left:20.8px;top:68.48px">counter[7]</div>
<div class="a tr" style="left:20.8px;top:77.66px">$auto$alumacc.cc:474:replace_al...</div>
<div class="a tr" style="left:20.8px;top:86.84px">$auto$alumacc.cc:474:replace_al...</div>
<div class="a tr" style="left:20.8px;top:96.02px">counter[5]</div>
<div class="a tr" style="left:20.8px;top:105.20px">$auto$alumacc.cc:474:replace_al...</div>
<div class="a tr" style="left:20.8px;top:114.38px">counter[4]</div>
<div class="a tr" style="left:20.8px;top:123.56px">counter[3]</div>
<div class="a tr" style="left:20.8px;top:132.74px">$auto$alumacc.cc:474:replace_al...</div>
<div class="a tr" style="left:20.8px;top:141.92px">counter[25]</div>
<div class="a" style="left:138px;top:1px;width:7px;height:150px;background:#e9e8e6;border-left:1px solid #dedcd9"></div>
<div class="a" style="left:139px;top:128px;width:5px;height:17px;background:#fbfbfb;border:1px solid #c5c3c0;border-radius:3px"></div><div class="a" style="left:140px;top:3px;width:0;height:0;border-left:1.6px solid transparent;border-right:1.6px solid transparent;border-bottom:2px solid #777"></div><div class="a" style="left:140px;top:147px;width:0;height:0;border-left:1.6px solid transparent;border-right:1.6px solid transparent;border-top:2px solid #777"></div>
</div>
<div class="a" style="left:345px;top:228px;width:146px;height:155px;background:#fff;border:1px solid #d2d0cd;overflow:hidden">
<div class="a" style="left:0;top:0;width:139px;height:12px;background:linear-gradient(#fafafa,#ecebea);border-bottom:1px solid #dad8d5"></div>
<div class="a" style="left:68px;top:1px;width:1px;height:10px;background:#dad8d5"></div>
<div class="a tr" style="left:2px;top:2px;color:#505050">Property</div>
<div class="a tr" style="left:71px;top:2px;color:#505050">Value</div>
<div class="a" style="left:0;top:11.8px;width:139px;height:10.2px;background:#bdbdbd"></div>
<div class="a tr" style="left:11.0px;top:12.3px;color:#f4f4f4">Net</div>
<div class="a arr" style="left:2.0px;top:15.4px"></div>
<div class="a" style="left:0;top:22.2px;width:139px;height:10.2px;background:#ededec"></div>
<div class="a tr" style="left:20.8px;top:22.7px;color:#3c3c3c">Name</div>
<div class="a tr" style="left:71.5px;top:22.7px">counter[25]</div>
<div class="a" style="left:0;top:32.6px;width:139px;height:10.2px;background:#bdbdbd"></div>
<div class="a tr" style="left:20.0px;top:33.1px;color:#f4f4f4">Driver</div>
<div class="a arr" style="left:12.7px;top:36.2px"></div>
<div class="a" style="left:0;top:42.7px;width:139px;height:10.2px;background:#ededec"></div>
<div class="a tr" style="left:30.7px;top:43.2px;color:#3c3c3c">Port</div>
<div class="a tr" style="left:71.5px;top:43.2px">O</div>
<div class="a" style="left:0;top:52.8px;width:139px;height:10.2px;background:#ffffff"></div>
<div class="a tr" style="left:30.7px;top:53.3px;color:#3c3c3c">Budget</div>
<div class="a tr" style="left:71.5px;top:53.3px">0.00</div>
<div class="a" style="left:0;top:63.0px;width:139px;height:10.2px;background:#ededec"></div>
<div class="a tr" style="left:30.7px;top:63.5px;color:#3c3c3c">Cell</div>
<div class="a tr" style="left:71.5px;top:63.5px">$auto$alumacc.cc...</div>
<div class="a" style="left:0;top:73.1px;width:139px;height:10.2px;background:#bdbdbd"></div>
<div class="a tr" style="left:20.0px;top:73.6px;color:#f4f4f4">Users</div>
<div class="a arr" style="left:12.7px;top:76.7px"></div>
<div class="a" style="left:0;top:83.2px;width:139px;height:10.2px;background:#bdbdbd"></div>
<div class="a tr" style="left:30.3px;top:83.7px;color:#f4f4f4">I2</div>
<div class="a arr" style="left:23.0px;top:86.8px"></div>
<div class="a" style="left:0;top:93.4px;width:139px;height:10.2px;background:#ffffff"></div>
<div class="a tr" style="left:40.0px;top:93.9px;color:#3c3c3c">Port</div>
<div class="a tr" style="left:71.5px;top:93.9px">I2</div>
<div class="a" style="left:0;top:103.5px;width:139px;height:10.2px;background:#ededec"></div>
<div class="a tr" style="left:40.0px;top:104.0px;color:#3c3c3c">Budget</div>
<div class="a tr" style="left:71.5px;top:104.0px">82793.00</div>
<div class="a" style="left:0;top:113.7px;width:139px;height:10.2px;background:#ffffff"></div>
<div class="a tr" style="left:40.0px;top:114.2px;color:#3c3c3c">Cell</div>
<div class="a tr" style="left:71.5px;top:114.2px">$auto$alumacc.cc...</div>
<div class="a" style="left:0;top:123.6px;width:139px;height:10.2px;background:#bdbdbd"></div>
<div class="a tr" style="left:30.3px;top:124.1px;color:#f4f4f4">I0</div>
<div class="a arr" style="left:23.0px;top:127.2px"></div>
<div class="a" style="left:0;top:133.8px;width:139px;height:10.2px;background:#ffffff"></div>
<div class="a tr" style="left:40.0px;top:134.3px;color:#3c3c3c">Port</div>
<div class="a tr" style="left:71.5px;top:134.3px">I0</div>
<div class="a" style="left:0;top:143.9px;width:139px;height:10.2px;background:#ededec"></div>
<div class="a tr" style="left:40.0px;top:144.4px;color:#3c3c3c">Budget</div>
<div class="a tr" style="left:71.5px;top:144.4px">82793.00</div>
<div class="a" style="left:138px;top:0;width:7px;height:153px;background:#e9e8e6;border-left:1px solid #dedcd9"></div>
<div class="a" style="left:138.5px;top:0.5px;width:6px;height:46px;background:#fbfbfb;border:1px solid #c5c3c0;border-radius:3px"></div><div class="a" style="left:140px;top:3px;width:0;height:0;border-left:1.6px solid transparent;border-right:1.6px solid transparent;border-bottom:2px solid #777"></div><div class="a" style="left:140px;top:148px;width:0;height:0;border-left:1.6px solid transparent;border-right:1.6px solid transparent;border-top:2px solid #777"></div>
</div>
  <div class="a" style="left:346px;top:389px;width:0"></div>
<svg class="a" style="left:0;top:0" width="496" height="400" viewBox="52 0 496 400">
<g fill="#5f88d8"><rect x="432.6" y="216.3" width="1.4" height="5.2"/><path d="M434.2,218.9 L437.8,216.2 V221.6 Z"/><path d="M437.8,216.2 L434.5,218.9 L437.8,221.6" fill="#5f88d8"/></g>
<g fill="#7a8cb0"><path d="M449.8,218.9 L453.5,216.2 V221.6 Z"/><rect x="453.2" y="216.6" width="1" height="4.6" opacity="0.6"/></g>
<g fill="#b0aeaa"><path d="M471.4,218.9 L467.7,216.2 V221.6 Z"/><rect x="467" y="216.6" width="1" height="4.6" opacity="0.6"/></g>
<g fill="#b0aeaa"><path d="M488.8,218.9 L485.1,216.2 V221.6 Z"/><rect x="489" y="216.3" width="1.3" height="5.2"/></g>
<path d="M502,216.5 L507,221.5 M507,216.5 L502,221.5" stroke="#e05866" stroke-width="1.4"/>
</svg>
  <!-- status bar -->
  <div class="a" style="left:0;top:388px;width:496px;height:1px;background:#e4e2df"></div>
  <div class="a" style="left:396.2px;top:389.5px;width:88px;height:9px;background:linear-gradient(#dedddb,#e6e5e3);border:1px solid #d2d0cd;border-radius:2px"></div>
  <div class="a" style="left:397.5px;top:391px;width:2.5px;height:6px;background:#e08a8a"></div>
  <div class="a" style="left:396.2px;top:391.2px;width:88px;font-size:6.6px;line-height:6.6px;color:#505050;text-align:center">0%</div>
</div>
</body></html>
